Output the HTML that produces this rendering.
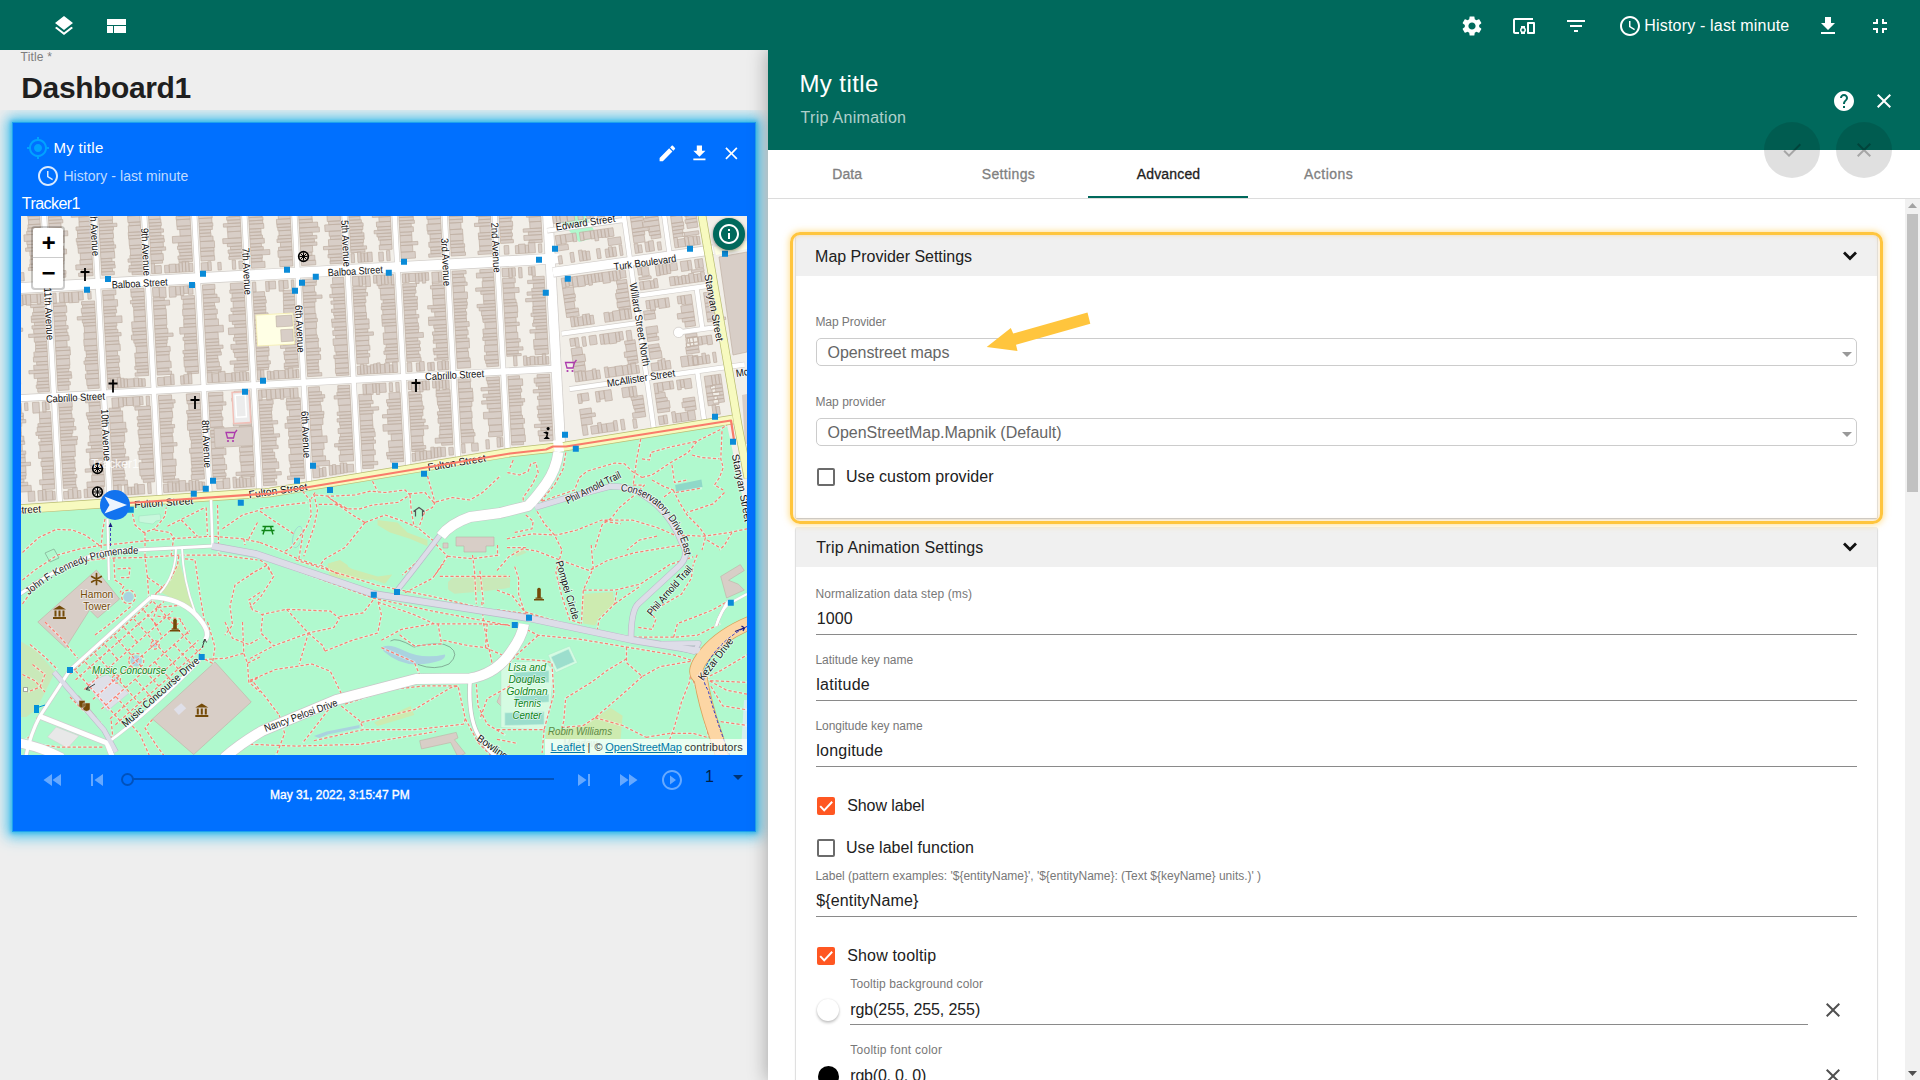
<!DOCTYPE html>
<html lang="en"><head><meta charset="utf-8"><title>Dashboard1</title>
<style>
*{box-sizing:border-box;margin:0;padding:0}
html,body{width:1920px;height:1080px;overflow:hidden;background:#eee;font-family:"Liberation Sans",sans-serif}
body{position:relative}
.t{position:absolute;white-space:nowrap;line-height:1;z-index:50}
.ic{position:absolute;display:block;z-index:51}
.abs{position:absolute}
#topbar{left:0;top:0;width:1920px;height:50px;background:#00695c;z-index:12}
#dash{left:0;top:110px;width:768px;height:970px;overflow:hidden;z-index:1}
#widget{left:12px;top:12px;width:744px;height:710px;background:#0070ff;border:1px solid #1ea2ee;box-shadow:0 0 13px 5px rgba(66,192,236,.95),0 0 4px 1px #1aa6e6}
#map{left:21px;top:216px;width:726px;height:539px;overflow:hidden;z-index:3;background:#f2efe9}
#panel{left:768px;top:50px;width:1152px;height:1030px;background:#fff;z-index:10;box-shadow:0 0 18px 1px rgba(0,0,0,.3)}
#phead{left:768px;top:50px;width:1152px;height:100px;background:#00695c;z-index:11}
.fab{width:56px;height:56px;border-radius:50%;background:rgba(0,0,0,.12);z-index:40}
#tabline{left:768px;top:198px;width:1152px;height:1px;background:#dcdcdc;z-index:12}
#ink{left:1088px;top:196px;width:160px;height:2px;background:#00695c;z-index:13}
.exp{background:#fff;z-index:12;box-shadow:0 1px 2px rgba(0,0,0,.25),0 0 1px rgba(0,0,0,.25)}
.exph{background:#f0f0f0;z-index:13}
.sel{border:1px solid #ccc;border-radius:5px;background:#fff;z-index:14}
.ul{height:1px;background:#8a8a8a;z-index:14}
.cb{width:18px;height:18px;border-radius:2px;z-index:14}
.cb.off{border:2px solid #6b6b6b}
.cb.on{background:#ff5722}
.z20{z-index:20}

</style></head>
<body>
<div class="abs" id="topbar"></div>
<svg class="ic" style="left:52.00px;top:13.50px;" width="24" height="24" viewBox="0 0 24 24"><path fill="#fff" d="M11.99 18.54l-7.37-5.73L3 14.07l9 7 9-7-1.63-1.27-7.38 5.74zM12 16l7.36-5.73L21 9l-9-7-9 7 1.63 1.27L12 16z"/></svg>
<svg class="ic" style="left:103.80px;top:14.00px;" width="24" height="24" viewBox="0 0 24 24"><path fill="#fff" d="M3 19h6v-7H3v7zm7 0h12v-7H10v7zM3 5v6h19V5H3z"/></svg>
<svg class="ic" style="left:1459.50px;top:13.50px;" width="24" height="24" viewBox="0 0 24 24"><path fill="#fff" d="M19.14 12.94c.04-.3.06-.61.06-.94 0-.32-.02-.64-.07-.94l2.03-1.58c.18-.14.23-.41.12-.61l-1.92-3.32c-.12-.22-.37-.29-.59-.22l-2.39.96c-.5-.38-1.03-.7-1.62-.94l-.36-2.54c-.04-.24-.24-.41-.48-.41h-3.84c-.24 0-.43.17-.47.41l-.36 2.54c-.59.24-1.13.57-1.62.94l-2.39-.96c-.22-.08-.47 0-.59.22L2.74 8.87c-.12.21-.08.47.12.61l2.03 1.58c-.05.3-.09.63-.09.94s.02.64.07.94l-2.03 1.58c-.18.14-.23.41-.12.61l1.92 3.32c.12.22.37.29.59.22l2.39-.96c.5.38 1.03.7 1.62.94l.36 2.54c.05.24.24.41.48.41h3.84c.24 0 .44-.17.47-.41l.36-2.54c.59-.24 1.13-.56 1.62-.94l2.39.96c.22.08.47 0 .59-.22l1.92-3.32c.12-.22.07-.47-.12-.61l-2.01-1.58zM12 15.6c-1.98 0-3.6-1.62-3.6-3.6s1.62-3.6 3.6-3.6 3.6 1.62 3.6 3.6-1.62 3.6-3.6 3.6z"/></svg>
<svg class="ic" style="left:1511.70px;top:13.50px;" width="24" height="24" viewBox="0 0 24 24"><path fill="#fff" d="M3 6h18V4H3c-1.1 0-2 .9-2 2v12c0 1.1.9 2 2 2h4v-2H3V6zm10 6H9v1.78c-.61.55-1 1.33-1 2.22s.39 1.67 1 2.22V20h4v-1.78c.61-.55 1-1.34 1-2.22s-.39-1.67-1-2.22V12zm-2 5.5c-.83 0-1.5-.67-1.5-1.500s.67-1.500 1.500-1.500 1.500.67 1.500 1.500-.67 1.500-1.500 1.500zM22 8h-6c-.5 0-1 .5-1 1v10c0 .5.5 1 1 1h6c.5 0 1-.5 1-1V9c0-.5-.5-1-1-1zm-1 10h-4v-8h4v8z"/></svg>
<svg class="ic" style="left:1564.00px;top:13.50px;" width="24" height="24" viewBox="0 0 24 24"><path fill="#fff" d="M10 18h4v-2h-4v2zM3 6v2h18V6H3zm3 7h12v-2H6v2z"/></svg>
<svg class="ic" style="left:1617.50px;top:13.50px;" width="24" height="24" viewBox="0 0 24 24"><path fill="#fff" d="M11.99 2C6.47 2 2 6.48 2 12s4.47 10 9.99 10C17.52 22 22 17.52 22 12S17.52 2 11.99 2zM12 20c-4.42 0-8-3.58-8-8s3.58-8 8-8 8 3.58 8 8-3.58 8-8 8zm.5-13H11v6l5.25 3.15.75-1.23-4.5-2.67z"/></svg>
<svg class="ic" style="left:1815.70px;top:13.50px;" width="24" height="24" viewBox="0 0 24 24"><path fill="#fff" d="M19 9h-4V3H9v6H5l7 7 7-7zM5 18v2h14v-2H5z"/></svg>
<svg class="ic" style="left:1868.00px;top:13.50px;" width="24" height="24" viewBox="0 0 24 24"><path fill="#fff" d="M5 16h3v3h2v-5H5v2zm3-8H5v2h5V5H8v3zm6 11h2v-3h3v-2h-5v5zm2-11V5h-2v5h5V8h-3z"/></svg>

<div class="abs" id="dash"><div class="abs" id="widget"></div></div>
<div class="abs" id="map"><svg width="726" height="539" viewBox="21 216 726 539" style="display:block;font-family:'Liberation Sans',sans-serif">
<rect x="21" y="216" width="726" height="539" fill="#f2efe9"/>
<path d="M20 513.5 270 497 510 457 565 451 727 425 735 462 741 490 747 520 747 756 20 756z" fill="#b0f9ce"/>
<path d="M556 216l28-3 14 24-19 5zM630 216h14l-2 4z" fill="#b0f9ce"/>
<g transform="translate(20 288) rotate(-3.15)">
<path d="M-17.7 -94h12.9v3.3h-12.9zM-17.7 -90.7h15.4v3.3h-15.4zM-17.7 -87.4h12.5v3.3h-12.5zM-17.7 -84.1h13.2v3.3h-13.2zM-17.7 -80.8h12.4v3.3h-12.4zM-17.7 -77.5h11.5v3.3h-11.5zM-17.7 -74.2h12.1v6.6h-12.1zM-17.7 -67.6h13v3.3h-13zM-17.7 -64.3h14v3.3h-14zM-17.7 -61h12.1v6.6h-12.1zM-17.7 -54.4h11.9v4.9h-11.9zM-17.7 -49.5h12.1v3.3h-12.1zM-17.7 -46.2h12v3.3h-12zM-17.7 -42.9h11.6v3.3h-11.6zM-17.7 -39.6h18.6v4.9h-18.6zM-17.7 -34.6h12.2v3.3h-12.2zM-17.7 -31.3h11.3v4.9h-11.3zM-17.7 -26.4h13.5v3.3h-13.5zM-17.7 -23.1h12.4v4.9h-12.4zM23.7 -94h-12.2v3.3h12.2zM23.7 -90.7h-13.7v4.9h13.7zM23.7 -85.8h-14.2v3.3h14.2zM23.7 -82.5h-12.9v3.3h12.9zM23.7 -79.2h-12v4.9h12zM23.7 -74.2h-12.3v3.3h12.3zM23.7 -70.9h-11.8v3.3h11.8zM23.7 -67.6h-11.6v4.9h11.6zM23.7 -62.7h-12.3v3.3h12.3zM23.7 -59.4h-12.8v3.3h12.8zM23.7 -56.1h-14v3.3h14zM23.7 -52.8h-16.9v6.6h16.9zM23.7 -46.2h-14.4v3.3h14.4zM23.7 -42.9h-13.8v3.3h13.8zM23.7 -39.6h-16v3.3h16zM23.7 -36.3h-11.9v4.9h11.9zM23.7 -31.3h-11.4v3.3h11.4zM23.7 -28h-12.1v4.9h12.1zM23.7 -23.1h-12.7v3.3h12.7zM23.7 -19.8h-14.3v2.8h14.3zM-17.7 -104h3.3v10.7h-3.3zM-14.4 -104h6.6v9.8h-6.6zM-7.8 -104h3.3v8.4h-3.3zM-1.2 -104h3.3v9.4h-3.3zM2.1 -104h6.6v8.3h-6.6zM12 -104h4.6v8.3h-4.6zM16.6 -104h6.6v10.1h-6.6zM-17.7 -7h3.3v-9.2h-3.3zM-14.4 -7h3.3v-10.8h-3.3zM-3.2 -7h3.3v-7.9h-3.3zM0.1 -7h4.6v-8.2h-4.6zM-17.7 17h13.7v3.3h-13.7zM-17.7 20.3h12.5v4.9h-12.5zM-17.7 25.2h14.4v3.3h-14.4zM-17.7 28.6h11.3v4.9h-11.3zM-17.7 33.5h13.1v3.3h-13.1zM-17.7 36.8h13.1v3.3h-13.1zM-17.7 40.1h18.1v3.3h-18.1zM-17.7 43.4h14.3v3.3h-14.3zM-17.7 46.7h11.7v3.3h-11.7zM-17.7 50h13.7v3.3h-13.7zM-17.7 53.3h11.5v6.6h-11.5zM-17.7 59.9h13.3v3.3h-13.3zM-17.7 63.2h14.2v6.6h-14.2zM-17.7 69.8h12.8v6.6h-12.8zM-17.7 76.4h13.7v3.3h-13.7zM-17.7 79.7h13.5v3.3h-13.5zM-17.7 83h12.9v3.3h-12.9zM-17.7 86.3h11.2v3.3h-11.2zM-17.7 89.6h12.8v3.3h-12.8zM-17.7 92.9h13.1v3.3h-13.1zM-17.7 96.2h12v6.6h-12zM-17.7 102.8h11.9v2.2h-11.9zM23.7 17h-14.1v3.3h14.1zM23.7 20.3h-11.4v4.9h11.4zM23.7 25.2h-12.5v3.3h12.5zM23.7 28.6h-14.1v3.3h14.1zM23.7 31.9h-14.1v3.3h14.1zM23.7 35.1h-11.3v3.3h11.3zM23.7 38.4h-13.9v3.3h13.9zM23.7 41.7h-12.4v4.9h12.4zM23.7 46.7h-17.7v3.3h17.7zM23.7 50h-12.3v4.9h12.3zM23.7 54.9h-11.2v3.3h11.2zM23.7 58.2h-11.4v3.3h11.4zM23.7 61.5h-11.6v3.3h11.6zM23.7 64.8h-13.4v4.9h13.4zM23.7 69.8h-14.2v4.9h14.2zM23.7 74.7h-11.2v3.3h11.2zM23.7 78h-14.3v4.9h14.3zM23.7 83h-19.4v3.3h19.4zM23.7 86.3h-14.5v4.9h14.5zM23.7 91.2h-11.2v3.3h11.2zM23.7 94.5h-11.9v3.3h11.9zM23.7 97.8h-12.9v3.3h12.9zM23.7 101.1h-11.6v3.9h11.6zM-14.4 7h3.3v10.1h-3.3zM-4.5 7h6.6v10.8h-6.6zM2.1 7h3.3v9.8h-3.3zM5.4 7h4.6v10.6h-4.6zM10 7h6.6v8.3h-6.6zM16.6 7h3.3v10.4h-3.3zM19.9 7h3.3v8.7h-3.3zM-17.7 125h14.1v3.3h-14.1zM-17.7 128.3h13.9v3.3h-13.9zM-17.7 131.6h16.2v3.3h-16.2zM-17.7 134.9h11.9v3.3h-11.9zM-17.7 138.2h11.1v6.6h-11.1zM-17.7 144.8h11v3.3h-11zM-17.7 148.1h13.3v4.9h-13.3zM-17.7 153.1h13.9v3.3h-13.9zM-17.7 156.4h11.1v6.6h-11.1zM-17.7 163h14.4v3.3h-14.4zM-17.7 166.3h13.5v3.3h-13.5zM-17.7 169.6h13.5v4.9h-13.5zM-17.7 174.5h18.6v3.3h-18.6zM-17.7 177.8h13.6v6.6h-13.6zM-17.7 184.4h13.6v3.3h-13.6zM-17.7 187.7h13v3.3h-13zM-17.7 191h11.1v3.3h-11.1zM-17.7 194.3h14.7v3.3h-14.7zM-17.7 197.6h17.9v6.2h-17.9zM23.7 125h-11.3v6.6h11.3zM23.7 131.6h-11.3v4.9h11.3zM23.7 136.5h-13.3v3.3h13.3zM23.7 139.8h-14.2v4.9h14.2zM23.7 144.8h-15.8v3.3h15.8zM23.7 148.1h-13.4v3.3h13.4zM23.7 151.4h-11.2v3.3h11.2zM23.7 154.7h-13.4v3.3h13.4zM23.7 158h-12.6v6.6h12.6zM23.7 164.6h-14.4v6.6h14.4zM23.7 171.2h-11.3v3.3h11.3zM23.7 174.5h-12.4v4.9h12.4zM23.7 179.5h-11.3v3.3h11.3zM23.7 182.8h-11.5v3.3h11.5zM23.7 186.1h-11.4v6.6h11.4zM23.7 192.7h-14.7v4.9h14.7zM23.7 197.6h-12.4v4.9h12.4zM-17.7 115h4.6v8.6h-4.6zM-13.1 115h3.3v10.1h-3.3zM-9.8 115h4.6v10.7h-4.6zM-1.9 115h3.3v7.7h-3.3zM6.1 115h6.6v10.7h-6.6zM16 115h3.3v10.4h-3.3zM19.3 115h3.3v8h-3.3zM-17.7 213.8h3.3v-8.6h-3.3zM-14.4 213.7h3.3v-9h-3.3zM-3.2 213.6h6.6v-10h-6.6zM6.7 213.5h4.6v-10.1h-4.6zM11.3 213.4h3.3v-10.7h-3.3zM14.6 213.4h6.6v-9.2h-6.6zM21.2 213.3h2.5v-8.4h-2.5zM32.3 -104h12.1v4.9h-12.1zM32.3 -99h17.3v4.9h-17.3zM32.3 -94.1h12.6v4.9h-12.6zM32.3 -89.1h12.9v4.9h-12.9zM32.3 -84.2h11.3v3.3h-11.3zM32.3 -80.9h17.2v3.3h-17.2zM32.3 -77.6h12.8v4.9h-12.8zM32.3 -72.6h12.7v3.3h-12.7zM32.3 -69.3h12.8v3.3h-12.8zM32.3 -66h14.1v3.3h-14.1zM32.3 -62.8h12.1v4.9h-12.1zM32.3 -57.8h12.5v3.3h-12.5zM32.3 -54.5h18.4v4.9h-18.4zM32.3 -49.5h14.4v6.6h-14.4zM32.3 -42.9h11.5v3.3h-11.5zM32.3 -39.6h13.5v3.3h-13.5zM32.3 -36.4h16.2v4.9h-16.2zM32.3 -31.4h13.3v6.6h-13.3zM32.3 -24.8h12.8v3.3h-12.8zM32.3 -21.5h12.1v3.3h-12.1zM32.3 -18.2h11.8v3.3h-11.8zM32.3 -14.9h14.5v3.3h-14.5zM32.3 -11.6h14.1v3.3h-14.1zM73.7 -104h-11.1v3.3h11.1zM73.7 -100.7h-11.7v3.3h11.7zM73.7 -97.4h-11.8v4.9h11.8zM73.7 -92.5h-11.1v3.3h11.1zM73.7 -89.2h-15.6v4.9h15.6zM73.7 -84.2h-12.7v6.6h12.7zM73.7 -77.6h-11.8v3.3h11.8zM73.7 -74.3h-13.2v3.3h13.2zM73.7 -71h-18.6v3.3h18.6zM73.7 -67.7h-11.1v4.9h11.1zM73.7 -62.8h-11.2v4.9h11.2zM73.7 -57.8h-14.5v3.3h14.5zM73.7 -54.5h-13.3v3.3h13.3zM73.7 -51.2h-13.3v4.9h13.3zM73.7 -46.3h-14.9v3.3h14.9zM73.7 -43h-14.3v3.3h14.3zM73.7 -39.7h-13.7v3.3h13.7zM73.7 -36.4h-13.5v4.9h13.5zM73.7 -31.4h-11.7v6.6h11.7zM73.7 -24.8h-12.4v4.9h12.4zM73.7 -19.9h-16.8v4.9h16.8zM73.7 -14.9h-11.2v3.3h11.2zM73.7 -11.6h-14.4v3.3h14.4zM32.3 17h12v3.3h-12zM32.3 20.3h13.2v6.6h-13.2zM32.3 26.9h11.4v3.3h-11.4zM32.3 30.2h12.4v4.9h-12.4zM32.3 35.1h11.5v4.9h-11.5zM32.3 40.1h13.6v3.3h-13.6zM32.3 43.4h12.1v3.3h-12.1zM32.3 46.7h13.1v3.3h-13.1zM32.3 50h14v4.9h-14zM32.3 54.9h11.6v6.6h-11.6zM32.3 61.5h14.3v3.3h-14.3zM32.3 64.8h14.4v4.9h-14.4zM32.3 69.8h13.2v3.3h-13.2zM32.3 73.1h13.3v6.6h-13.3zM32.3 79.7h13v3.3h-13zM32.3 83h11.9v3.3h-11.9zM32.3 86.3h14.2v3.3h-14.2zM32.3 89.6h14.5v3.3h-14.5zM32.3 92.9h11.4v3.3h-11.4zM32.3 96.2h12.7v3.3h-12.7zM32.3 99.5h11.1v4.9h-11.1zM73.7 17h-13.1v3.3h13.1zM73.7 20.3h-12.3v3.3h12.3zM73.7 23.6h-13.7v4.9h13.7zM73.7 28.6h-13.1v3.3h13.1zM73.7 31.9h-18.2v3.3h18.2zM73.7 35.1h-13.3v3.3h13.3zM73.7 38.4h-12.4v3.3h12.4zM73.7 41.7h-11.7v6.6h11.7zM73.7 48.3h-12.4v6.6h12.4zM73.7 54.9h-12.9v6.6h12.9zM73.7 61.5h-12.4v4.9h12.4zM73.7 66.5h-11.2v3.3h11.2zM73.7 69.8h-11.1v3.3h11.1zM73.7 73.1h-12.4v3.3h12.4zM73.7 76.4h-13.9v3.3h13.9zM73.7 79.7h-12.6v6.6h12.6zM73.7 86.3h-11.5v3.3h11.5zM73.7 89.6h-13.2v4.9h13.2zM73.7 94.5h-12.2v6.6h12.2zM73.7 101.1h-11.4v3.3h11.4zM32.3 7h3.3v10.4h-3.3zM38.9 7h4.6v9.6h-4.6zM43.5 7h4.6v10h-4.6zM48.1 7h3.3v10.5h-3.3zM51.4 7h6.6v10.5h-6.6zM58 7h4.6v8.3h-4.6zM67.3 7h3.3v7.9h-3.3zM32.3 115h13.4v6.6h-13.4zM32.3 121.6h13.1v3.3h-13.1zM32.3 124.9h12.1v3.3h-12.1zM32.3 128.2h12.6v4.9h-12.6zM32.3 133.1h14.5v3.3h-14.5zM32.3 136.4h13.7v4.9h-13.7zM32.3 141.4h15.8v3.3h-15.8zM32.3 144.7h12.5v3.3h-12.5zM32.3 148h11.5v3.3h-11.5zM32.3 151.3h16.8v3.3h-16.8zM32.3 154.6h16v4.9h-16zM32.3 159.6h13.9v6.6h-13.9zM32.3 166.2h13.8v4.9h-13.8zM32.3 171.1h12.2v3.3h-12.2zM32.3 174.4h13.1v3.3h-13.1zM32.3 177.7h12.8v4.9h-12.8zM32.3 182.7h13.2v3.3h-13.2zM32.3 186h11.6v3.3h-11.6zM32.3 189.3h14.1v3.3h-14.1zM32.3 192.6h12.9v3.3h-12.9zM32.3 195.9h12.6v3.3h-12.6zM32.3 199.2h12.9v3.3h-12.9zM73.7 115h-14.5v3.3h14.5zM73.7 118.3h-11.3v3.3h11.3zM73.7 121.6h-11.2v6.6h11.2zM73.7 128.2h-14.4v3.3h14.4zM73.7 131.5h-13.6v3.3h13.6zM73.7 134.8h-12.5v3.3h12.5zM73.7 138.1h-11.8v3.3h11.8zM73.7 141.4h-13v3.3h13zM73.7 144.7h-11.8v6.6h11.8zM73.7 151.3h-12.3v6.6h12.3zM73.7 157.9h-14.3v3.3h14.3zM73.7 161.2h-11.2v3.3h11.2zM73.7 164.5h-16.5v3.3h16.5zM73.7 167.8h-13.1v6.6h13.1zM73.7 174.4h-13.6v6.6h13.6zM73.7 181h-12.9v3.3h12.9zM73.7 184.3h-18.6v3.3h18.6zM73.7 187.6h-11.7v3.3h11.7zM73.7 190.9h-12.5v6.6h12.5zM73.7 197.5h-17.6v5.3h17.6zM32.3 213.2h4.6v-7.5h-4.6zM36.9 213.1h4.6v-9.1h-4.6zM41.5 213.1h4.6v-11h-4.6zM46.2 213.1h3.3v-7.6h-3.3zM52.8 213h3.3v-8.4h-3.3zM56.1 212.9h6.6v-9.9h-6.6zM69.3 212.8h3.3v-10.9h-3.3zM82.3 -94h14.2v3.3h-14.2zM82.3 -90.7h13.6v3.3h-13.6zM82.3 -87.4h11.8v4.9h-11.8zM82.3 -82.5h13.9v6.6h-13.9zM82.3 -75.9h13.5v3.3h-13.5zM82.3 -72.6h12.4v3.3h-12.4zM82.3 -69.3h13.9v6.6h-13.9zM82.3 -62.7h13.7v3.3h-13.7zM82.3 -59.4h17.9v3.3h-17.9zM82.3 -56.1h14.3v3.3h-14.3zM82.3 -52.8h13.6v3.3h-13.6zM82.3 -49.5h13.9v4.9h-13.9zM82.3 -44.5h13.2v3.3h-13.2zM82.3 -41.2h13.8v3.3h-13.8zM82.3 -37.9h15.5v3.3h-15.5zM82.3 -34.6h13.7v3.3h-13.7zM82.3 -31.3h14v6.6h-14zM82.3 -24.7h11.1v3.3h-11.1zM82.3 -21.4h13.5v3.3h-13.5zM82.3 -18.1h13.9v3.3h-13.9zM82.3 -14.8h11v3.3h-11zM82.3 -11.5h12.7v3.3h-12.7zM123.7 -94h-13.1v3.3h13.1zM123.7 -90.7h-14.3v6.6h14.3zM123.7 -84.1h-11.8v3.3h11.8zM123.7 -80.8h-14.5v3.3h14.5zM123.7 -77.5h-12.2v3.3h12.2zM123.7 -74.2h-13.6v4.9h13.6zM123.7 -69.3h-12.1v3.3h12.1zM123.7 -66h-12.3v6.6h12.3zM123.7 -59.4h-11.4v3.3h11.4zM123.7 -56.1h-12.2v6.6h12.2zM123.7 -49.5h-12.6v3.3h12.6zM123.7 -46.2h-12.5v3.3h12.5zM123.7 -42.9h-12.2v6.6h12.2zM123.7 -36.3h-11.9v3.3h11.9zM123.7 -33h-11.5v6.6h11.5zM123.7 -26.4h-12.2v3.3h12.2zM123.7 -23.1h-14.3v3.3h14.3zM123.7 -19.8h-11.4v3.3h11.4zM123.7 -16.5h-13.6v3.3h13.6zM123.7 -13.2h-14.2v3.3h14.2zM123.7 -9.9h-11v2.9h11zM82.3 -104h4.6v9.3h-4.6zM86.9 -104h3.3v8h-3.3zM90.2 -104h6.6v7.5h-6.6zM100.1 -104h4.6v9.6h-4.6zM116 -104h3.3v9.1h-3.3zM119.3 -104h3.3v10h-3.3zM82.3 7h13.2v4.9h-13.2zM82.3 11.9h11.1v4.9h-11.1zM82.3 16.9h14.3v6.6h-14.3zM82.3 23.5h12.4v3.3h-12.4zM82.3 26.8h12.9v3.3h-12.9zM82.3 30.1h11.4v3.3h-11.4zM82.3 33.4h17.8v6.6h-17.8zM82.3 40h12.4v3.3h-12.4zM82.3 43.3h11.6v3.3h-11.6zM82.3 46.6h13.1v3.3h-13.1zM82.3 49.9h16.1v3.3h-16.1zM82.3 53.2h13.4v4.9h-13.4zM82.3 58.1h13.6v3.3h-13.6zM82.3 61.4h14.5v6.6h-14.5zM82.3 68h11.5v4.9h-11.5zM82.3 73h13v3.3h-13zM82.3 76.3h13.2v3.3h-13.2zM82.3 79.6h12v4.9h-12zM82.3 84.5h12.6v3.3h-12.6zM82.3 87.8h12.3v3.3h-12.3zM82.3 91.1h12.7v3.9h-12.7zM123.7 7h-13.3v3.3h13.3zM123.7 10.3h-13.2v4.9h13.2zM123.7 15.2h-12.1v3.3h12.1zM123.7 18.6h-14.2v3.3h14.2zM123.7 21.9h-12.2v3.3h12.2zM123.7 25.2h-11.3v3.3h11.3zM123.7 28.5h-11.5v6.6h11.5zM123.7 35.1h-11.5v4.9h11.5zM123.7 40h-14.1v6.6h14.1zM123.7 46.6h-14.1v3.3h14.1zM123.7 49.9h-13.4v3.3h13.4zM123.7 53.2h-15.1v4.9h15.1zM123.7 58.1h-13v3.3h13zM123.7 61.4h-11.9v3.3h11.9zM123.7 64.7h-11v6.6h11zM123.7 71.3h-12.7v4.9h12.7zM123.7 76.3h-12.5v4.9h12.5zM123.7 81.2h-12.3v3.3h12.3zM123.7 84.5h-13.4v3.3h13.4zM123.7 87.8h-11.3v3.3h11.3zM123.7 91.1h-13.5v3.3h13.5zM82.3 105h3.3v-9.8h-3.3zM85.6 105h3.3v-9.3h-3.3zM88.9 105h3.3v-8.7h-3.3zM92.2 105h3.3v-10.4h-3.3zM95.5 105h3.3v-9.2h-3.3zM98.8 105h3.3v-8.5h-3.3zM102.1 105h6.6v-8.2h-6.6zM108.7 105h4.6v-8.7h-4.6zM113.3 105h3.3v-7.9h-3.3zM116.6 105h3.3v-7.6h-3.3zM82.3 125h11.2v3.3h-11.2zM82.3 128.3h13.3v4.9h-13.3zM82.3 133.2h13.2v6.6h-13.2zM82.3 139.8h15.8v6.6h-15.8zM82.3 146.4h16.7v3.3h-16.7zM82.3 149.8h13.9v3.3h-13.9zM82.3 153.1h14v6.6h-14zM82.3 159.7h12.5v3.3h-12.5zM82.3 163h12.8v3.3h-12.8zM82.3 166.3h14.2v4.9h-14.2zM82.3 171.2h13.1v3.3h-13.1zM82.3 174.5h17v3.3h-17zM82.3 177.8h13.2v3.3h-13.2zM82.3 181.1h11.4v3.3h-11.4zM82.3 184.4h11.4v3.3h-11.4zM82.3 187.7h11.8v3.3h-11.8zM82.3 191h12.3v3.3h-12.3zM82.3 194.3h11.3v3.3h-11.3zM82.3 197.6h14.3v4.9h-14.3zM123.7 125h-15.6v3.3h15.6zM123.7 128.3h-12.1v6.6h12.1zM123.7 134.9h-13.9v3.3h13.9zM123.7 138.2h-13v3.3h13zM123.7 141.5h-13.8v3.3h13.8zM123.7 144.8h-12.5v3.3h12.5zM123.7 148.1h-13.7v4.9h13.7zM123.7 153.1h-13.2v3.3h13.2zM123.7 156.4h-13.1v6.6h13.1zM123.7 163h-12.1v3.3h12.1zM123.7 166.3h-13.4v3.3h13.4zM123.7 169.6h-15v3.3h15zM123.7 172.9h-14.2v4.9h14.2zM123.7 177.8h-11.5v3.3h11.5zM123.7 181.1h-14.4v6.6h14.4zM123.7 187.7h-14.2v6.6h14.2zM123.7 194.3h-12.7v3.3h12.7zM123.7 197.6h-11.2v3.3h11.2zM85.6 115h6.6v10.3h-6.6zM92.2 115h4.6v9.4h-4.6zM96.8 115h3.3v8.3h-3.3zM100.1 115h6.6v8.4h-6.6zM106.7 115h6.6v9.3h-6.6zM113.3 115h3.3v8.2h-3.3zM119.9 115h3.3v9.5h-3.3zM82.3 212.7h4.6v-10.5h-4.6zM86.9 212.6h3.3v-11h-3.3zM93.5 212.5h3.3v-10.3h-3.3zM96.8 212.5h3.3v-7.6h-3.3zM100.1 212.5h3.3v-7.6h-3.3zM103.4 212.4h3.3v-10.5h-3.3zM106.7 212.4h6.6v-9.5h-6.6zM116.6 212.3h3.3v-10.8h-3.3zM132.3 -104h14.5v3.3h-14.5zM132.3 -100.7h13v3.3h-13zM132.3 -97.4h14v4.9h-14zM132.3 -92.5h14.2v6.6h-14.2zM132.3 -85.9h13v3.3h-13zM132.3 -82.6h12.6v6.6h-12.6zM132.3 -76h14.8v3.3h-14.8zM132.3 -72.7h18.6v3.3h-18.6zM132.3 -69.4h13.5v3.3h-13.5zM132.3 -66.1h11.5v4.9h-11.5zM132.3 -61.1h12v3.3h-12zM132.3 -57.8h12.3v3.3h-12.3zM132.3 -54.5h11.6v3.3h-11.6zM132.3 -51.2h14.1v3.3h-14.1zM132.3 -47.9h11.5v3.3h-11.5zM132.3 -44.6h14v3.3h-14zM132.3 -41.3h14.4v3.3h-14.4zM132.3 -38h13.2v4.9h-13.2zM132.3 -33.1h15.3v3.3h-15.3zM132.3 -29.8h11.2v3.3h-11.2zM132.3 -26.5h12.5v6.6h-12.5zM132.3 -19.9h11.5v2.9h-11.5zM173.7 -104h-11.6v3.3h11.6zM173.7 -100.7h-12.7v3.3h12.7zM173.7 -97.4h-14.1v6.6h14.1zM173.7 -90.8h-18.9v3.3h18.9zM173.7 -87.5h-11.9v3.3h11.9zM173.7 -84.2h-12v3.3h12zM173.7 -80.9h-14.4v3.3h14.4zM173.7 -77.6h-12.8v3.3h12.8zM173.7 -74.3h-13.9v4.9h13.9zM173.7 -69.4h-11.1v3.3h11.1zM173.7 -66.1h-11.5v3.3h11.5zM173.7 -62.8h-14v3.3h14zM173.7 -59.5h-13.7v6.6h13.7zM173.7 -52.9h-13.5v3.3h13.5zM173.7 -49.6h-11v6.6h11zM173.7 -43h-18.8v6.6h18.8zM173.7 -36.4h-13.2v3.3h13.2zM173.7 -33.1h-14.2v3.3h14.2zM173.7 -29.8h-13v3.3h13zM173.7 -26.5h-12.3v3.3h12.3zM173.7 -23.2h-14.3v3.3h14.3zM173.7 -19.9h-13.5v2.9h13.5zM132.3 -7h3.3v-10.5h-3.3zM135.6 -7h6.6v-7.7h-6.6zM145.5 -7h4.6v-7.6h-4.6zM150.1 -7h6.6v-8.4h-6.6zM156.7 -7h3.3v-8.1h-3.3zM160 -7h3.3v-9.4h-3.3zM163.3 -7h3.3v-10.7h-3.3zM166.6 -7h3.3v-10.4h-3.3zM169.9 -7h3.8v-8.3h-3.8zM132.3 17h11.2v3.3h-11.2zM132.3 20.3h16.2v4.9h-16.2zM132.3 25.2h11.8v3.3h-11.8zM132.3 28.6h12.4v6.6h-12.4zM132.3 35.1h12.4v3.3h-12.4zM132.3 38.4h12.4v6.6h-12.4zM132.3 45h11.8v3.3h-11.8zM132.3 48.3h13v4.9h-13zM132.3 53.3h18v3.3h-18zM132.3 56.6h12.5v3.3h-12.5zM132.3 59.9h11.7v3.3h-11.7zM132.3 63.2h11.1v3.3h-11.1zM132.3 66.5h14.3v4.9h-14.3zM132.3 71.4h13.2v3.3h-13.2zM132.3 74.7h12.9v6.6h-12.9zM132.3 81.3h14.4v6.6h-14.4zM132.3 87.9h12.1v3.3h-12.1zM132.3 91.2h14.4v3.3h-14.4zM173.7 17h-13.1v3.3h13.1zM173.7 20.3h-11.5v4.9h11.5zM173.7 25.2h-12v4.9h12zM173.7 30.2h-12.6v6.6h12.6zM173.7 36.8h-11.7v3.3h11.7zM173.7 40.1h-12.1v4.9h12.1zM173.7 45h-12.2v3.3h12.2zM173.7 48.3h-16.5v6.6h16.5zM173.7 54.9h-12.1v3.3h12.1zM173.7 58.2h-13.7v3.3h13.7zM173.7 61.5h-12.2v3.3h12.2zM173.7 64.8h-12.5v6.6h12.5zM173.7 71.4h-14.5v3.3h14.5zM173.7 74.7h-13.3v3.3h13.3zM173.7 78h-14v3.3h14zM173.7 81.3h-14v6.6h14zM173.7 87.9h-13.2v4.9h13.2zM173.7 92.9h-11.4v2.1h11.4zM132.3 7h6.6v9.2h-6.6zM138.9 7h6.6v10.5h-6.6zM148.8 7h6.6v10.5h-6.6zM155.4 7h4.6v8.7h-4.6zM160 7h3.3v9.4h-3.3zM163.3 7h4.6v7.5h-4.6zM167.9 7h4.6v8.6h-4.6zM132.3 105h6.6v-8h-6.6zM138.9 105h6.6v-8.3h-6.6zM145.5 105h3.3v-10.5h-3.3zM155.4 105h3.3v-8.4h-3.3zM158.7 105h4.6v-9.4h-4.6zM163.3 105h3.3v-11h-3.3zM132.3 115h13.1v4.9h-13.1zM132.3 120h16.3v3.3h-16.3zM132.3 123.2h14.2v4.9h-14.2zM132.3 128.2h12.7v3.3h-12.7zM132.3 131.5h13.1v6.6h-13.1zM132.3 138.1h12.1v3.3h-12.1zM132.3 141.4h11.4v3.3h-11.4zM132.3 144.7h14.5v3.3h-14.5zM132.3 148h12.8v4.9h-12.8zM132.3 153h11.7v3.3h-11.7zM132.3 156.3h12.2v6.6h-12.2zM132.3 162.9h15.9v3.3h-15.9zM132.3 166.2h12.1v6.6h-12.1zM132.3 172.8h11.1v6.6h-11.1zM132.3 179.4h14v6.6h-14zM132.3 186h13v6.6h-13zM132.3 192.6h12.8v3.3h-12.8zM132.3 195.9h11.6v3.3h-11.6zM132.3 199.2h15.9v3h-15.9zM173.7 115h-13.5v6.6h13.5zM173.7 121.6h-13.2v3.3h13.2zM173.7 124.9h-11.7v6.6h11.7zM173.7 131.5h-14.1v3.3h14.1zM173.7 134.8h-13.2v3.3h13.2zM173.7 138.1h-13.1v3.3h13.1zM173.7 141.4h-13.9v3.3h13.9zM173.7 144.7h-14.1v6.6h14.1zM173.7 151.3h-12.4v3.3h12.4zM173.7 154.6h-12.4v3.3h12.4zM173.7 157.9h-11.9v3.3h11.9zM173.7 161.2h-11v3.3h11zM173.7 164.5h-11.4v4.9h11.4zM173.7 169.5h-13.3v4.9h13.3zM173.7 174.4h-12.2v4.9h12.2zM173.7 179.4h-12.2v3.3h12.2zM173.7 182.7h-12.2v3.3h12.2zM173.7 186h-11.9v3.3h11.9zM173.7 189.3h-12.6v3.3h12.6zM173.7 192.6h-12.2v3.3h12.2zM173.7 195.9h-13v4.9h13zM132.3 212.1h4.6v-8.3h-4.6zM136.9 212.1h4.6v-10.8h-4.6zM141.5 212h3.3v-9h-3.3zM144.8 212h3.3v-8.9h-3.3zM148.1 211.9h6.6v-10.6h-6.6zM154.7 211.9h3.3v-7.8h-3.3zM158 211.8h3.3v-10.2h-3.3zM161.3 211.8h3.3v-9.5h-3.3zM164.6 211.8h3.3v-10h-3.3zM167.9 211.7h3.3v-8.3h-3.3zM171.2 211.7h2.5v-7.9h-2.5zM182.3 -104h11.7v6.6h-11.7zM182.3 -97.4h11.4v3.3h-11.4zM182.3 -94.1h14v3.3h-14zM182.3 -90.8h11.6v3.3h-11.6zM182.3 -87.5h11.1v3.3h-11.1zM182.3 -84.2h14v4.9h-14zM182.3 -79.3h11.4v3.3h-11.4zM182.3 -76h13.8v3.3h-13.8zM182.3 -72.7h11.5v3.3h-11.5zM182.3 -69.4h13.2v6.6h-13.2zM182.3 -62.8h13.5v3.3h-13.5zM182.3 -59.5h13v4.9h-13zM182.3 -54.5h13.7v3.3h-13.7zM182.3 -51.2h13v3.3h-13zM182.3 -47.9h11.1v3.3h-11.1zM182.3 -44.6h11.3v3.3h-11.3zM182.3 -41.3h13.2v4.9h-13.2zM182.3 -36.4h14.3v6.6h-14.3zM182.3 -29.8h13.6v3.3h-13.6zM182.3 -26.5h13.4v4.9h-13.4zM182.3 -21.5h13.7v4.5h-13.7zM223.7 -104h-13.5v3.3h13.5zM223.7 -100.7h-11.6v3.3h11.6zM223.7 -97.4h-15.3v3.3h15.3zM223.7 -94.1h-13.2v4.9h13.2zM223.7 -89.2h-11.8v4.9h11.8zM223.7 -84.2h-11.5v6.6h11.5zM223.7 -77.6h-13.5v3.3h13.5zM223.7 -74.3h-13.9v3.3h13.9zM223.7 -71h-11.5v3.3h11.5zM223.7 -67.7h-11.4v4.9h11.4zM223.7 -62.8h-11.2v3.3h11.2zM223.7 -59.5h-13.5v3.3h13.5zM223.7 -56.2h-12.6v3.3h12.6zM223.7 -52.9h-17.2v3.3h17.2zM223.7 -49.6h-13.5v4.9h13.5zM223.7 -44.6h-13.3v6.6h13.3zM223.7 -38h-18.6v4.9h18.6zM223.7 -33.1h-14.3v3.3h14.3zM223.7 -29.8h-11.3v3.3h11.3zM223.7 -26.5h-13.9v3.3h13.9zM223.7 -23.2h-12.8v3.3h12.8zM223.7 -19.9h-13.5v2.9h13.5zM182.3 -7h6.6v-8.1h-6.6zM188.9 -7h3.3v-8.8h-3.3zM198.8 -7h3.3v-7.6h-3.3zM213.3 -7h3.3v-9.2h-3.3zM219.9 -7h3.8v-7.8h-3.8zM182.3 7h12.4v4.9h-12.4zM182.3 11.9h11.8v4.9h-11.8zM182.3 16.9h14v3.3h-14zM182.3 20.2h16.1v4.9h-16.1zM182.3 25.1h11v3.3h-11zM182.3 28.4h11.6v3.3h-11.6zM182.3 31.8h13.4v4.9h-13.4zM182.3 36.7h12.1v4.9h-12.1zM182.3 41.7h14v6.6h-14zM182.3 48.3h18.5v6.6h-18.5zM182.3 54.9h13v6.6h-13zM182.3 61.5h13.3v3.3h-13.3zM182.3 64.8h13.2v3.3h-13.2zM182.3 68.1h17.2v3.3h-17.2zM182.3 71.4h14.3v3.3h-14.3zM182.3 74.7h15.1v3.3h-15.1zM182.3 78h11.4v3.3h-11.4zM182.3 81.2h11.7v3.3h-11.7zM182.3 84.5h12.6v4.9h-12.6zM182.3 89.5h14.2v3.3h-14.2zM182.3 92.8h13.8v2.2h-13.8zM223.7 7h-13.5v6.6h13.5zM223.7 13.6h-14.4v3.3h14.4zM223.7 16.9h-12.4v4.9h12.4zM223.7 21.8h-13.7v3.3h13.7zM223.7 25.1h-11.8v6.6h11.8zM223.7 31.8h-14.3v3.3h14.3zM223.7 35h-12.5v3.3h12.5zM223.7 38.3h-16.6v6.6h16.6zM223.7 44.9h-13.6v3.3h13.6zM223.7 48.2h-11.4v3.3h11.4zM223.7 51.5h-17.9v6.6h17.9zM223.7 58.1h-12.1v3.3h12.1zM223.7 61.4h-13.4v3.3h13.4zM223.7 64.7h-11.1v3.3h11.1zM223.7 68h-16.3v4.9h16.3zM223.7 73h-14.3v3.3h14.3zM223.7 76.3h-13.1v4.9h13.1zM223.7 81.2h-11v3.3h11zM223.7 84.5h-18v3.3h18zM223.7 87.8h-13.9v3.3h13.9zM223.7 91.1h-14.4v3.9h14.4zM182.3 105h4.6v-10.6h-4.6zM186.9 105h6.6v-8.8h-6.6zM193.5 105h6.6v-10.6h-6.6zM200.1 105h6.6v-8.2h-6.6zM206.7 105h3.3v-8.7h-3.3zM210 105h4.6v-8.7h-4.6zM214.6 105h3.3v-9.2h-3.3zM217.9 105h3.3v-9.1h-3.3zM221.2 105h2.5v-8h-2.5zM182.3 115h14.5v3.3h-14.5zM182.3 118.3h14.3v6.6h-14.3zM182.3 124.9h17v3.3h-17zM182.3 128.2h13.2v4.9h-13.2zM182.3 133.1h11.8v3.3h-11.8zM182.3 136.4h12.1v3.3h-12.1zM182.3 139.8h13.2v3.3h-13.2zM182.3 143.1h12.2v6.6h-12.2zM182.3 149.7h13.7v3.3h-13.7zM182.3 153h14.5v3.3h-14.5zM182.3 156.3h14v3.3h-14zM182.3 159.6h13.7v4.9h-13.7zM182.3 164.5h12.1v6.6h-12.1zM182.3 171.1h14.3v6.6h-14.3zM182.3 177.7h11.3v3.3h-11.3zM182.3 181h12.6v6.6h-12.6zM182.3 187.6h14.2v4.9h-14.2zM182.3 192.6h12v3.3h-12zM182.3 195.9h13.2v3.3h-13.2zM182.3 199.2h12.4v2.5h-12.4zM223.7 115h-15.7v6.6h15.7zM223.7 121.6h-18.3v3.3h18.3zM223.7 124.9h-11.5v6.6h11.5zM223.7 131.5h-11.1v6.6h11.1zM223.7 138.1h-12.1v3.3h12.1zM223.7 141.4h-13.4v4.9h13.4zM223.7 146.3h-18.2v3.3h18.2zM223.7 149.7h-12.4v4.9h12.4zM223.7 154.6h-12.1v3.3h12.1zM223.7 157.9h-13.1v3.3h13.1zM223.7 161.2h-11.1v3.3h11.1zM223.7 164.5h-11.3v6.6h11.3zM223.7 171.1h-13.4v4.9h13.4zM223.7 176.1h-13.1v3.3h13.1zM223.7 179.4h-13.5v6.6h13.5zM223.7 186h-12.9v3.3h12.9zM223.7 189.3h-12.8v6.6h12.8zM223.7 195.9h-18.2v3.3h18.2zM223.7 199.2h-13.2v2h13.2zM185.6 211.5h6.6v-7.7h-6.6zM192.2 211.5h6.6v-10.2h-6.6zM202.1 211.4h3.3v-10.7h-3.3zM205.4 211.3h3.3v-8.7h-3.3zM208.7 211.3h3.3v-10.5h-3.3zM212 211.3h3.3v-8.7h-3.3zM215.3 211.2h4.6v-8.6h-4.6zM219.9 211.2h3.3v-10.1h-3.3zM232.3 -94h12.2v4.9h-12.2zM232.3 -89h14.2v4.9h-14.2zM232.3 -84.1h11.1v3.3h-11.1zM232.3 -80.8h11.7v3.3h-11.7zM232.3 -77.5h14.5v3.3h-14.5zM232.3 -74.2h12.7v6.6h-12.7zM232.3 -67.6h11.5v3.3h-11.5zM232.3 -64.3h12.7v3.3h-12.7zM232.3 -61h13.1v3.3h-13.1zM232.3 -57.7h14.1v3.3h-14.1zM232.3 -54.4h13.7v3.3h-13.7zM232.3 -51.1h14.5v4.9h-14.5zM232.3 -46.2h11.5v3.3h-11.5zM232.3 -42.9h11.5v3.3h-11.5zM232.3 -39.6h12.6v3.3h-12.6zM232.3 -36.3h14.2v4.9h-14.2zM232.3 -31.3h11.1v3.3h-11.1zM232.3 -28h12.8v3.3h-12.8zM232.3 -24.7h19.1v4.9h-19.1zM232.3 -19.8h11.4v3.3h-11.4zM232.3 -16.5h11v3.3h-11zM232.3 -13.2h13.6v6.2h-13.6zM273.7 -94h-13.9v3.3h13.9zM273.7 -90.7h-11.8v3.3h11.8zM273.7 -87.4h-12v3.3h12zM273.7 -84.1h-14.4v3.3h14.4zM273.7 -80.8h-12.9v3.3h12.9zM273.7 -77.5h-11.1v3.3h11.1zM273.7 -74.2h-13.4v3.3h13.4zM273.7 -70.9h-12.1v3.3h12.1zM273.7 -67.6h-12.3v3.3h12.3zM273.7 -64.3h-13.2v3.3h13.2zM273.7 -61h-11.9v6.6h11.9zM273.7 -54.4h-13.9v4.9h13.9zM273.7 -49.5h-13.7v3.3h13.7zM273.7 -46.2h-13v3.3h13zM273.7 -42.9h-12.1v4.9h12.1zM273.7 -37.9h-13.3v3.3h13.3zM273.7 -34.6h-14.5v3.3h14.5zM273.7 -31.3h-11.2v4.9h11.2zM273.7 -26.4h-13.4v3.3h13.4zM273.7 -23.1h-14.2v6.6h14.2zM273.7 -16.5h-12.7v3.3h12.7zM273.7 -13.2h-13v6.2h13zM235.6 -104h6.6v8.2h-6.6zM245.5 -104h3.3v8h-3.3zM248.8 -104h4.6v10.8h-4.6zM253.4 -104h3.3v8.8h-3.3zM256.7 -104h4.6v8h-4.6zM261.3 -104h3.3v8.8h-3.3zM264.6 -104h6.6v9.1h-6.6zM271.2 -104h2.5v8.5h-2.5zM232.3 17h11.6v4.9h-11.6zM232.3 21.9h12.3v3.3h-12.3zM232.3 25.2h12.8v3.3h-12.8zM232.3 28.6h11.7v3.3h-11.7zM232.3 31.9h12.1v3.3h-12.1zM232.3 35.1h11.9v3.3h-11.9zM232.3 38.4h14v6.6h-14zM232.3 45h12v4.9h-12zM232.3 50h17.3v3.3h-17.3zM232.3 53.3h13.1v4.9h-13.1zM232.3 58.2h13v3.3h-13zM232.3 61.5h14v3.3h-14zM232.3 64.8h17.2v3.3h-17.2zM232.3 68.1h12.5v4.9h-12.5zM232.3 73.1h13v3.3h-13zM232.3 76.4h12.7v4.9h-12.7zM232.3 81.3h11.5v4.9h-11.5zM232.3 86.3h13.6v3.3h-13.6zM232.3 89.6h12v3.3h-12zM232.3 92.9h11.4v2.1h-11.4zM273.7 17h-11.1v3.3h11.1zM273.7 20.3h-11.2v3.3h11.2zM273.7 23.6h-11.2v3.3h11.2zM273.7 26.9h-11.5v4.9h11.5zM273.7 31.9h-11.5v3.3h11.5zM273.7 35.1h-11.7v6.6h11.7zM273.7 41.8h-12.1v6.6h12.1zM273.7 48.4h-12.8v3.3h12.8zM273.7 51.6h-11.9v3.3h11.9zM273.7 54.9h-11.9v4.9h11.9zM273.7 59.9h-13.3v3.3h13.3zM273.7 63.2h-11.5v4.9h11.5zM273.7 68.1h-14.2v3.3h14.2zM273.7 71.4h-16.8v3.3h16.8zM273.7 74.7h-11.8v3.3h11.8zM273.7 78h-13.8v3.3h13.8zM273.7 81.3h-13.5v4.9h13.5zM273.7 86.3h-12.5v3.3h12.5zM273.7 89.6h-14.1v3.3h14.1zM273.7 92.9h-14.2v2.1h14.2zM232.3 7h3.3v9.9h-3.3zM245.5 7h3.3v10h-3.3zM248.8 7h6.6v7.8h-6.6zM258.7 7h4.6v10.4h-4.6zM263.3 7h4.6v8h-4.6zM271.2 7h2.5v10.4h-2.5zM232.3 105h3.3v-10.6h-3.3zM235.6 105h3.3v-10h-3.3zM242.2 105h3.3v-8.3h-3.3zM245.5 105h3.3v-7.6h-3.3zM248.8 105h4.6v-8.5h-4.6zM253.4 105h6.6v-8.2h-6.6zM260 105h3.3v-9h-3.3zM263.3 105h4.6v-10.4h-4.6zM267.9 105h3.3v-8.2h-3.3zM271.2 105h2.5v-8.5h-2.5zM232.3 125h14.2v4.9h-14.2zM232.3 129.9h13.1v3.3h-13.1zM232.3 133.2h12.6v3.3h-12.6zM232.3 136.6h12v3.3h-12zM232.3 139.9h12.2v3.3h-12.2zM232.3 143.2h12.2v3.3h-12.2zM232.3 146.5h17.6v3.3h-17.6zM232.3 149.8h12.6v3.3h-12.6zM232.3 153.1h13.1v3.3h-13.1zM232.3 156.4h13v3.3h-13zM232.3 159.7h18.8v3.3h-18.8zM232.3 163h15.3v3.3h-15.3zM232.3 166.3h14.9v4.9h-14.9zM232.3 171.2h16.7v3.3h-16.7zM232.3 174.5h11.1v3.3h-11.1zM232.3 177.8h12.9v3.3h-12.9zM232.3 181.1h12.9v3.3h-12.9zM232.3 184.4h14.3v3.3h-14.3zM232.3 187.7h16.3v6.6h-16.3zM232.3 194.3h12.5v3.3h-12.5zM232.3 197.6h18.4v3.3h-18.4zM232.3 200.9h13.7v3.3h-13.7zM232.3 204.2h11.3v3.3h-11.3zM232.3 207.5h13.2v3.3h-13.2zM273.7 125h-13.8v3.3h13.8zM273.7 128.3h-14.3v3.3h14.3zM273.7 131.6h-13.8v4.9h13.8zM273.7 136.6h-11.5v6.6h11.5zM273.7 143.2h-14.2v3.3h14.2zM273.7 146.5h-13.8v3.3h13.8zM273.7 149.8h-16.6v4.9h16.6zM273.7 154.7h-13.2v3.3h13.2zM273.7 158h-13.5v4.9h13.5zM273.7 163h-12.7v3.3h12.7zM273.7 166.3h-13.9v4.9h13.9zM273.7 171.2h-13.9v3.3h13.9zM273.7 174.5h-12.4v6.6h12.4zM273.7 181.1h-14.4v6.6h14.4zM273.7 187.7h-13.7v3.3h13.7zM273.7 191h-13.1v3.3h13.1zM273.7 194.3h-14.3v4.9h14.3zM273.7 199.3h-13.7v3.3h13.7zM273.7 202.6h-17v3.3h17zM232.3 115h3.3v10.7h-3.3zM235.6 115h4.6v7.5h-4.6zM240.2 115h4.6v10.8h-4.6zM244.8 115h4.6v9.6h-4.6zM249.5 115h4.6v9.4h-4.6zM254.1 115h3.3v10.5h-3.3zM257.4 115h6.6v8.7h-6.6zM264 115h3.3v10.6h-3.3zM267.3 115h4.6v10.3h-4.6zM282.3 -94h14.1v3.3h-14.1zM282.3 -90.7h12.3v3.3h-12.3zM282.3 -87.4h14.4v6.6h-14.4zM282.3 -80.8h12.8v3.3h-12.8zM282.3 -77.5h14.4v3.3h-14.4zM282.3 -74.2h11.6v3.3h-11.6zM282.3 -70.9h13.3v4.9h-13.3zM282.3 -66h13.6v3.3h-13.6zM282.3 -62.7h13.6v4.9h-13.6zM282.3 -57.7h13.2v4.9h-13.2zM282.3 -52.8h13.3v3.3h-13.3zM282.3 -49.5h18.4v4.9h-18.4zM282.3 -44.5h19.8v4.9h-19.8zM282.3 -39.6h12.6v3.3h-12.6zM282.3 -36.3h16.9v3.3h-16.9zM282.3 -33h14.3v3.3h-14.3zM282.3 -29.7h16.6v3.3h-16.6zM282.3 -26.4h12v6.6h-12zM282.3 -19.8h11.1v3.3h-11.1zM282.3 -16.5h13.8v4.9h-13.8zM282.3 -11.5h14.4v4.5h-14.4zM323.7 -94h-13.9v3.3h13.9zM323.7 -90.7h-12.2v3.3h12.2zM323.7 -87.4h-11.2v6.6h11.2zM323.7 -80.8h-15.3v6.6h15.3zM323.7 -74.2h-12.3v4.9h12.3zM323.7 -69.3h-14.3v3.3h14.3zM323.7 -66h-12.4v3.3h12.4zM323.7 -62.7h-12.3v3.3h12.3zM323.7 -59.4h-14.2v3.3h14.2zM323.7 -56.1h-13.2v6.6h13.2zM323.7 -49.5h-12v3.3h12zM323.7 -46.2h-16v6.6h16zM323.7 -39.6h-12v4.9h12zM323.7 -34.6h-11v3.3h11zM323.7 -31.3h-13.1v6.6h13.1zM323.7 -24.7h-18.5v3.3h18.5zM323.7 -21.4h-13.5v4.9h13.5zM323.7 -16.5h-14.4v3.3h14.4zM323.7 -13.2h-12.4v3.3h12.4zM323.7 -9.9h-12.7v2.9h12.7zM282.3 -104h3.3v8h-3.3zM285.6 -104h6.6v10.7h-6.6zM292.2 -104h3.3v8.7h-3.3zM298.8 -104h3.3v10.5h-3.3zM302.1 -104h3.3v8.9h-3.3zM305.4 -104h6.6v10.2h-6.6zM312 -104h3.3v9.9h-3.3zM315.3 -104h3.3v10.6h-3.3zM318.6 -104h3.3v10.4h-3.3zM282.3 7h14.1v3.3h-14.1zM282.3 10.3h13.7v3.3h-13.7zM282.3 13.6h11.7v6.6h-11.7zM282.3 20.2h13v3.3h-13zM282.3 23.5h18.8v3.3h-18.8zM282.3 26.8h12.6v3.3h-12.6zM282.3 30.1h11.2v4.9h-11.2zM282.3 35.1h11.1v6.6h-11.1zM282.3 41.7h11.8v4.9h-11.8zM282.3 46.6h12.9v3.3h-12.9zM282.3 49.9h11.7v6.6h-11.7zM282.3 56.5h11.1v6.6h-11.1zM282.3 63.1h11.9v3.3h-11.9zM282.3 66.4h13v3.3h-13zM282.3 69.7h12.4v6.6h-12.4zM282.3 76.3h14.4v3.3h-14.4zM282.3 79.6h12.7v3.3h-12.7zM282.3 82.9h14.1v4.9h-14.1zM282.3 87.8h11.7v3.3h-11.7zM282.3 91.1h11.3v3.3h-11.3zM282.3 94.4h11.7v3.3h-11.7zM282.3 97.7h11.7v3.3h-11.7zM282.3 101h14.3v3.3h-14.3zM323.7 7h-11.2v6.6h11.2zM323.7 13.6h-13.2v3.3h13.2zM323.7 16.9h-12.2v6.6h12.2zM323.7 23.5h-14.8v3.3h14.8zM323.7 26.8h-11.1v3.3h11.1zM323.7 30.1h-14v3.3h14zM323.7 33.4h-11.3v4.9h11.3zM323.7 38.3h-13.9v3.3h13.9zM323.7 41.6h-11.9v3.3h11.9zM323.7 44.9h-11.1v3.3h11.1zM323.7 48.2h-14.4v3.3h14.4zM323.7 51.5h-14.1v4.9h14.1zM323.7 56.5h-11.7v3.3h11.7zM323.7 59.8h-13.8v4.9h13.8zM323.7 64.7h-11.2v3.3h11.2zM323.7 68h-14v6.6h14zM323.7 74.6h-12.7v6.6h12.7zM323.7 81.2h-11.7v3.3h11.7zM323.7 84.5h-14.1v3.3h14.1zM323.7 87.8h-13v4.9h13zM323.7 92.8h-13v4.9h13zM323.7 97.7h-13.3v4.9h13.3zM323.7 102.7h-12.6v2.3h12.6zM282.3 115h11.2v4.9h-11.2zM282.3 120h13v3.3h-13zM282.3 123.2h16v3.3h-16zM282.3 126.5h14.1v3.3h-14.1zM282.3 129.8h11.2v3.3h-11.2zM282.3 133.2h11.9v6.6h-11.9zM282.3 139.8h14.3v3.3h-14.3zM282.3 143.1h13.8v3.3h-13.8zM282.3 146.4h12.8v6.6h-12.8zM282.3 153h11v4.9h-11zM282.3 157.9h11.3v6.6h-11.3zM282.3 164.5h16v6.6h-16zM282.3 171.1h12.6v6.6h-12.6zM282.3 177.7h11.1v6.6h-11.1zM282.3 184.3h13.5v4.9h-13.5zM282.3 189.2h17.2v4.9h-17.2zM323.7 115h-11.8v3.3h11.8zM323.7 118.3h-12v3.3h12zM323.7 121.6h-13.1v3.3h13.1zM323.7 124.9h-16v3.3h16zM323.7 128.2h-12.3v6.6h12.3zM323.7 134.8h-11.7v6.6h11.7zM323.7 141.4h-13.9v3.3h13.9zM323.7 144.7h-11.5v3.3h11.5zM323.7 148h-14.3v3.3h14.3zM323.7 151.3h-12.1v3.3h12.1zM323.7 154.6h-11.6v3.3h11.6zM323.7 157.9h-13.9v4.9h13.9zM323.7 162.9h-11.9v3.3h11.9zM323.7 166.2h-12.9v3.3h12.9zM323.7 169.5h-13.7v3.3h13.7zM323.7 172.8h-18.2v3.3h18.2zM323.7 176.1h-14.7v3.3h14.7zM323.7 179.4h-12.9v4.9h12.9zM323.7 184.3h-14.2v6.6h14.2zM282.3 205.7h6.6v-10.9h-6.6zM288.9 205.1h3.3v-8.3h-3.3zM292.2 204.8h3.3v-9h-3.3zM298.8 204h3.3v-9.6h-3.3zM302.1 203.7h3.3v-10.1h-3.3zM305.4 203.2h4.6v-8.4h-4.6zM310 202.8h3.3v-10.5h-3.3zM313.3 202.4h3.3v-9.8h-3.3zM316.6 201.9h6.6v-7.7h-6.6zM332.3 -94h14.7v3.3h-14.7zM332.3 -90.7h13.5v3.3h-13.5zM332.3 -87.4h12v6.6h-12zM332.3 -80.8h11.9v3.3h-11.9zM332.3 -77.5h19.3v3.3h-19.3zM332.3 -74.2h11.7v3.3h-11.7zM332.3 -70.9h11.7v3.3h-11.7zM332.3 -67.6h11v3.3h-11zM332.3 -64.3h13.3v3.3h-13.3zM332.3 -61h17.4v3.3h-17.4zM332.3 -57.7h11.3v4.9h-11.3zM332.3 -52.8h11.1v3.3h-11.1zM332.3 -49.5h12.2v3.3h-12.2zM332.3 -46.2h13.8v3.3h-13.8zM332.3 -42.9h13.3v3.3h-13.3zM332.3 -39.6h12.3v3.3h-12.3zM332.3 -36.3h14.1v3.3h-14.1zM332.3 -33h14.1v3.3h-14.1zM332.3 -29.7h13.3v3.3h-13.3zM332.3 -26.4h12.7v3.3h-12.7zM332.3 -23.1h16v3.3h-16zM332.3 -19.8h14.2v2.8h-14.2zM373.7 -94h-11.2v3.3h11.2zM373.7 -90.7h-16.2v4.9h16.2zM373.7 -85.8h-13v4.9h13zM373.7 -80.8h-14.3v4.9h14.3zM373.7 -75.8h-12.8v3.3h12.8zM373.7 -72.5h-11.9v3.3h11.9zM373.7 -69.2h-11.5v4.9h11.5zM373.7 -64.3h-12v3.3h12zM373.7 -61h-14.4v3.3h14.4zM373.7 -57.7h-13.2v3.3h13.2zM373.7 -54.4h-18v3.3h18zM373.7 -51.1h-11.5v4.9h11.5zM373.7 -46.2h-14.3v4.9h14.3zM373.7 -41.2h-13.3v3.3h13.3zM373.7 -37.9h-17v3.3h17zM373.7 -34.6h-14.4v3.3h14.4zM373.7 -31.3h-13v3.3h13zM373.7 -28h-11.6v4.9h11.6zM373.7 -23.1h-12.7v4.9h12.7zM332.3 -104h4.6v8.2h-4.6zM336.9 -104h3.3v9.1h-3.3zM343.5 -104h4.6v10.9h-4.6zM348.1 -104h3.3v8.1h-3.3zM351.4 -104h4.6v7.6h-4.6zM356.1 -104h3.3v8.3h-3.3zM359.4 -104h3.3v10.3h-3.3zM362.7 -104h6.6v9.5h-6.6zM369.3 -104h4.4v8.3h-4.4zM332.3 -7h3.3v-9h-3.3zM338.9 -7h3.3v-10.6h-3.3zM342.2 -7h3.3v-9h-3.3zM345.5 -7h3.3v-9.1h-3.3zM348.8 -7h4.6v-9.5h-4.6zM360 -7h4.6v-9h-4.6zM367.9 -7h3.3v-10.1h-3.3zM332.3 17h13.3v3.3h-13.3zM332.3 20.3h12.7v3.3h-12.7zM332.3 23.6h14.4v3.3h-14.4zM332.3 26.9h11.9v3.3h-11.9zM332.3 30.2h12.4v3.3h-12.4zM332.3 33.5h11.3v3.3h-11.3zM332.3 36.8h11.7v6.6h-11.7zM332.3 43.4h12.2v3.3h-12.2zM332.3 46.7h12.1v3.3h-12.1zM332.3 50h14.4v4.9h-14.4zM332.3 54.9h14.2v4.9h-14.2zM332.3 59.9h12.7v3.3h-12.7zM332.3 63.2h18.1v3.3h-18.1zM332.3 66.5h13.3v4.9h-13.3zM332.3 71.4h13v4.9h-13zM332.3 76.4h13.8v4.9h-13.8zM332.3 81.3h11.4v3.3h-11.4zM332.3 84.6h13.2v3.3h-13.2zM332.3 87.9h11.7v6.6h-11.7zM373.7 17h-15.4v3.3h15.4zM373.7 20.3h-14.1v6.6h14.1zM373.7 26.9h-14v4.9h14zM373.7 31.8h-11.9v3.3h11.9zM373.7 35.1h-13.5v3.3h13.5zM373.7 38.4h-14.1v3.3h14.1zM373.7 41.7h-12.8v4.9h12.8zM373.7 46.7h-14.1v4.9h14.1zM373.7 51.6h-14.1v3.3h14.1zM373.7 54.9h-14v3.3h14zM373.7 58.2h-11.7v6.6h11.7zM373.7 64.8h-13.6v6.6h13.6zM373.7 71.4h-13.5v4.9h13.5zM373.7 76.4h-11.3v3.3h11.3zM373.7 79.7h-12.6v3.3h12.6zM373.7 83h-13.9v3.3h13.9zM373.7 86.3h-11.7v4.9h11.7zM373.7 91.2h-12.6v3.3h12.6zM332.3 7h6.6v9.4h-6.6zM338.9 7h3.3v10h-3.3zM342.2 7h3.3v8.2h-3.3zM345.5 7h4.6v10.7h-4.6zM353.4 7h3.3v7.7h-3.3zM356.7 7h4.6v10.4h-4.6zM361.3 7h3.3v9.3h-3.3zM364.6 7h3.3v9.6h-3.3zM367.9 7h3.3v8.6h-3.3zM371.2 7h2.5v10.8h-2.5zM332.3 105h3.3v-8.2h-3.3zM335.6 105h3.3v-10h-3.3zM338.9 105h3.3v-9.2h-3.3zM342.2 105h3.3v-7.9h-3.3zM345.5 105h3.3v-9h-3.3zM348.8 105h3.3v-9.8h-3.3zM352.1 105h3.3v-10.5h-3.3zM355.4 105h4.6v-8.8h-4.6zM360 105h4.6v-10h-4.6zM364.6 105h3.3v-7.9h-3.3zM367.9 105h4.6v-10.7h-4.6zM332.3 125h12.6v6.6h-12.6zM332.3 131.6h14v3.3h-14zM332.3 134.9h11.3v3.3h-11.3zM332.3 138.2h19.2v3.3h-19.2zM332.3 141.5h13.5v3.3h-13.5zM332.3 144.8h12.4v6.6h-12.4zM332.3 151.4h12.5v4.9h-12.5zM332.3 156.4h12.6v3.3h-12.6zM332.3 159.7h13.6v3.3h-13.6zM332.3 163h14.3v4.9h-14.3zM332.3 167.9h12.4v3.3h-12.4zM332.3 171.2h14.2v3.3h-14.2zM332.3 174.5h11.9v6.6h-11.9zM332.3 181.1h13.4v4.9h-13.4zM332.3 186.1h11.6v6.6h-11.6zM332.3 192.7h15.3v3.3h-15.3zM332.3 196h11v3.3h-11zM373.7 125h-11.1v6.6h11.1zM373.7 131.6h-13.9v3.3h13.9zM373.7 134.9h-13.2v3.3h13.2zM373.7 138.2h-11.8v3.3h11.8zM373.7 141.5h-13.7v4.9h13.7zM373.7 146.5h-18.8v3.3h18.8zM373.7 149.8h-13.8v3.3h13.8zM373.7 153.1h-13.9v3.3h13.9zM373.7 156.4h-18.9v6.6h18.9zM373.7 163h-14.1v3.3h14.1zM373.7 166.3h-11.2v6.6h11.2zM373.7 172.9h-14.3v6.6h14.3zM373.7 179.5h-14v4.9h14zM373.7 184.4h-16.8v3.3h16.8zM373.7 187.7h-16.2v3.3h16.2zM373.7 191h-13.2v3.3h13.2zM336.9 115h3.3v10.6h-3.3zM340.2 115h6.6v10.6h-6.6zM346.8 115h3.3v8.7h-3.3zM350.1 115h3.3v11h-3.3zM353.4 115h6.6v9.1h-6.6zM363.3 115h3.3v8.8h-3.3zM369.9 115h3.3v9.5h-3.3zM382.3 -94h16.6v3.3h-16.6zM382.3 -90.7h12.2v6.6h-12.2zM382.3 -84.1h11.8v6.6h-11.8zM382.3 -77.5h16.9v4.9h-16.9zM382.3 -72.6h12.2v3.3h-12.2zM382.3 -69.3h19.1v3.3h-19.1zM382.3 -66h14.5v6.6h-14.5zM382.3 -59.4h14.2v3.3h-14.2zM382.3 -56.1h12.3v3.3h-12.3zM382.3 -52.8h14.2v3.3h-14.2zM382.3 -49.5h14.3v3.3h-14.3zM382.3 -46.2h15.1v3.3h-15.1zM382.3 -42.9h11.8v3.3h-11.8zM382.3 -39.6h13.7v4.9h-13.7zM382.3 -34.6h11.8v3.3h-11.8zM382.3 -31.3h11.8v6.6h-11.8zM382.3 -24.7h17.4v3.3h-17.4zM382.3 -21.4h12v6.6h-12zM382.3 -14.8h14.3v6.6h-14.3zM423.7 -94h-14.1v3.3h14.1zM423.7 -90.7h-12.6v4.9h12.6zM423.7 -85.8h-13.7v6.6h13.7zM423.7 -79.2h-14v3.3h14zM423.7 -75.9h-11.6v4.9h11.6zM423.7 -70.9h-13.1v3.3h13.1zM423.7 -67.6h-12.7v3.3h12.7zM423.7 -64.3h-14.3v6.6h14.3zM423.7 -57.7h-12.8v3.3h12.8zM423.7 -54.4h-13.5v3.3h13.5zM423.7 -51.1h-13.6v4.9h13.6zM423.7 -46.2h-12.6v4.9h12.6zM423.7 -41.2h-14v6.6h14zM423.7 -34.6h-13.5v3.3h13.5zM423.7 -31.3h-11.5v4.9h11.5zM423.7 -26.4h-11.5v3.3h11.5zM423.7 -23.1h-13.1v4.9h13.1zM423.7 -18.1h-11.5v3.3h11.5zM423.7 -14.8h-11.5v3.3h11.5zM423.7 -11.5h-13.8v3.3h13.8zM382.3 -104h3.3v10.6h-3.3zM385.6 -104h3.3v10.3h-3.3zM388.9 -104h3.3v9.2h-3.3zM392.2 -104h3.3v9.6h-3.3zM395.5 -104h6.6v8.4h-6.6zM405.4 -104h3.3v10.7h-3.3zM408.7 -104h6.6v10.6h-6.6zM382.3 17h13.8v3.3h-13.8zM382.3 20.3h12.5v3.3h-12.5zM382.3 23.6h12.9v3.3h-12.9zM382.3 26.9h11.5v3.3h-11.5zM382.3 30.2h14v3.3h-14zM382.3 33.5h13.5v3.3h-13.5zM382.3 36.8h13.6v3.3h-13.6zM382.3 40.1h13.4v3.3h-13.4zM382.3 43.4h11.6v4.9h-11.6zM382.3 48.3h14.4v3.3h-14.4zM382.3 51.6h12.6v4.9h-12.6zM382.3 56.6h13.5v3.3h-13.5zM382.3 59.9h13.8v3.3h-13.8zM382.3 63.2h13.2v3.3h-13.2zM382.3 66.5h17.9v4.9h-17.9zM382.3 71.4h12.2v3.3h-12.2zM382.3 74.7h14.2v3.3h-14.2zM382.3 78h13.4v3.3h-13.4zM382.3 81.3h14.2v3.3h-14.2zM382.3 84.6h12.3v3.3h-12.3zM382.3 87.9h13.5v3.3h-13.5zM382.3 91.2h14.3v3.8h-14.3zM423.7 17h-11.7v3.3h11.7zM423.7 20.3h-13.8v3.3h13.8zM423.7 23.6h-12.1v6.6h12.1zM423.7 30.2h-12.2v3.3h12.2zM423.7 33.5h-12v6.6h12zM423.7 40.1h-17.6v3.3h17.6zM423.7 43.4h-14.2v3.3h14.2zM423.7 46.7h-11v4.9h11zM423.7 51.6h-17.5v3.3h17.5zM423.7 54.9h-17.6v4.9h17.6zM423.7 59.9h-12.7v3.3h12.7zM423.7 63.2h-11.9v3.3h11.9zM423.7 66.5h-14.3v3.3h14.3zM423.7 69.8h-13.4v4.9h13.4zM423.7 74.7h-14v3.3h14zM423.7 78h-11.2v4.9h11.2zM423.7 83h-14.5v3.3h14.5zM423.7 86.3h-14v3.3h14zM423.7 89.6h-11.1v3.3h11.1zM423.7 92.9h-13.8v2.1h13.8zM382.3 7h3.3v9.1h-3.3zM385.6 7h3.3v8.7h-3.3zM388.9 7h6.6v8h-6.6zM395.5 7h3.3v10.4h-3.3zM398.8 7h3.3v8.1h-3.3zM402.1 7h3.3v10.3h-3.3zM405.4 7h3.3v7.7h-3.3zM412 7h6.6v11h-6.6zM418.6 7h3.3v9.4h-3.3zM382.3 105h4.6v-9h-4.6zM391.5 105h3.3v-8.3h-3.3zM394.8 105h4.6v-9.4h-4.6zM402.8 105h3.3v-7.9h-3.3zM406.1 105h3.3v-8.1h-3.3zM412.7 105h4.6v-8.4h-4.6zM417.3 105h3.3v-9.2h-3.3zM420.6 105h3.1v-8.7h-3.1zM382.3 125h11.5v3.3h-11.5zM382.3 128.3h12.9v3.3h-12.9zM382.3 131.6h12.6v3.3h-12.6zM382.3 134.9h13v4.9h-13zM382.3 139.9h14.3v3.3h-14.3zM382.3 143.2h13.1v3.3h-13.1zM382.3 146.5h13.1v3.3h-13.1zM382.3 149.8h11.7v3.3h-11.7zM382.3 153.1h15v3.3h-15zM382.3 156.4h13.4v3.3h-13.4zM382.3 159.7h17.5v3.3h-17.5zM382.3 163h12.8v6.6h-12.8zM382.3 169.6h11.6v6.6h-11.6zM382.3 176.2h11.8v3.3h-11.8zM382.3 179.5h14.1v3.3h-14.1zM382.3 182.8h12.3v2.2h-12.3zM423.7 125h-13.9v3.3h13.9zM423.7 128.3h-14.1v3.3h14.1zM423.7 131.6h-13.3v4.9h13.3zM423.7 136.6h-13.2v3.3h13.2zM423.7 139.9h-12.3v3.3h12.3zM423.7 143.2h-11.5v3.3h11.5zM423.7 146.5h-13.8v3.3h13.8zM423.7 149.8h-13v3.3h13zM423.7 153.1h-13.6v4.9h13.6zM423.7 158h-11.8v3.3h11.8zM423.7 161.3h-12.3v3.3h12.3zM423.7 164.6h-12.5v4.9h12.5zM423.7 169.6h-13.3v3.3h13.3zM423.7 172.9h-17.5v4.9h17.5zM423.7 177.8h-11.3v2.5h11.3zM382.3 115h3.3v7.8h-3.3zM385.6 115h3.3v10.2h-3.3zM388.9 115h4.6v8h-4.6zM393.5 115h3.3v10.8h-3.3zM396.8 115h3.3v9h-3.3zM400.1 115h3.3v9.2h-3.3zM406.7 115h3.3v7.6h-3.3zM410 115h3.3v10.1h-3.3zM413.3 115h3.3v8.1h-3.3zM416.6 115h3.3v9.8h-3.3zM419.9 115h3.3v9.1h-3.3zM382.3 194.7h3.3v-7.9h-3.3zM385.6 194.3h4.6v-9.9h-4.6zM390.2 193.8h3.3v-8.4h-3.3zM393.5 193.5h3.3v-8.9h-3.3zM396.8 193h4.6v-7.8h-4.6zM401.4 192.6h3.3v-11h-3.3zM404.7 192.2h3.3v-9.9h-3.3zM408 191.8h3.3v-9.8h-3.3zM411.3 191.4h4.6v-9.1h-4.6zM419.3 190.5h4.4v-7.7h-4.4zM432.3 -94h13v3.3h-13zM432.3 -90.7h19v3.3h-19zM432.3 -87.4h13v3.3h-13zM432.3 -84.1h13.9v3.3h-13.9zM432.3 -80.8h12.5v3.3h-12.5zM432.3 -77.5h13.5v3.3h-13.5zM432.3 -74.2h17.1v3.3h-17.1zM432.3 -70.9h14.4v3.3h-14.4zM432.3 -67.6h12.1v3.3h-12.1zM432.3 -64.3h13.1v6.6h-13.1zM432.3 -57.7h12.1v6.6h-12.1zM432.3 -51.1h12.2v3.3h-12.2zM432.3 -47.8h13.3v3.3h-13.3zM432.3 -44.5h13.3v3.3h-13.3zM432.3 -41.2h11.4v6.6h-11.4zM432.3 -34.6h12.8v4.9h-12.8zM432.3 -29.7h12.9v6.6h-12.9zM432.3 -23.1h12.7v3.3h-12.7zM432.3 -19.8h14v3.3h-14zM432.3 -16.5h13.6v4.9h-13.6zM432.3 -11.5h14.4v3.3h-14.4zM473.7 -94h-13.4v3.3h13.4zM473.7 -90.7h-12.4v3.3h12.4zM473.7 -87.4h-13.3v6.6h13.3zM473.7 -80.8h-12.7v3.3h12.7zM473.7 -77.5h-12.3v3.3h12.3zM473.7 -74.2h-11.5v4.9h11.5zM473.7 -69.3h-12.5v4.9h12.5zM473.7 -64.3h-13.2v3.3h13.2zM473.7 -61h-14.2v3.3h14.2zM473.7 -57.7h-15.3v3.3h15.3zM473.7 -54.4h-17.9v3.3h17.9zM473.7 -51.1h-14.5v4.9h14.5zM473.7 -46.2h-11.7v3.3h11.7zM473.7 -42.9h-12.1v3.3h12.1zM473.7 -39.6h-16.4v3.3h16.4zM473.7 -36.3h-11.3v6.6h11.3zM473.7 -29.7h-13.1v3.3h13.1zM473.7 -26.4h-13v3.3h13zM473.7 -23.1h-12.6v6.6h12.6zM473.7 -16.5h-12.5v4.9h12.5zM473.7 -11.5h-14.5v3.3h14.5zM432.3 -104h4.6v9.6h-4.6zM436.9 -104h4.6v9.3h-4.6zM448.1 -104h3.3v10h-3.3zM456.1 -104h3.3v9.1h-3.3zM459.4 -104h6.6v10.2h-6.6zM466 -104h4.6v8.9h-4.6zM432.3 7h14v3.3h-14zM432.3 10.3h11.3v3.3h-11.3zM432.3 13.6h12.6v4.9h-12.6zM432.3 18.6h14.4v3.3h-14.4zM432.3 21.9h11.4v6.6h-11.4zM432.3 28.5h14.1v6.6h-14.1zM432.3 35.1h13v3.3h-13zM432.3 38.4h13.5v3.3h-13.5zM432.3 41.6h12.9v3.3h-12.9zM432.3 44.9h11.4v3.3h-11.4zM432.3 48.2h12.3v3.3h-12.3zM432.3 51.5h11.7v3.3h-11.7zM432.3 54.8h11.8v3.3h-11.8zM432.3 58.1h14.2v4.9h-14.2zM432.3 63.1h11.8v3.3h-11.8zM432.3 66.4h12.7v4.9h-12.7zM432.3 71.3h11.2v3.3h-11.2zM432.3 74.6h13.3v3.3h-13.3zM432.3 77.9h13.3v6.6h-13.3zM432.3 84.5h11.5v3.3h-11.5zM432.3 87.8h12v6.6h-12zM432.3 94.4h13.2v3.3h-13.2zM432.3 97.7h13.4v6.6h-13.4zM473.7 7h-13.6v3.3h13.6zM473.7 10.3h-17.3v4.9h17.3zM473.7 15.2h-11.1v3.3h11.1zM473.7 18.6h-11.9v6.6h11.9zM473.7 25.1h-18.8v3.3h18.8zM473.7 28.4h-13.9v3.3h13.9zM473.7 31.8h-11.6v6.6h11.6zM473.7 38.4h-11.5v3.3h11.5zM473.7 41.6h-18.3v3.3h18.3zM473.7 44.9h-16.4v3.3h16.4zM473.7 48.2h-14.4v4.9h14.4zM473.7 53.2h-13.6v3.3h13.6zM473.7 56.5h-13.3v3.3h13.3zM473.7 59.8h-11.5v6.6h11.5zM473.7 66.4h-13.8v4.9h13.8zM473.7 71.3h-13.6v3.3h13.6zM473.7 74.6h-14.4v3.3h14.4zM473.7 77.9h-12.3v4.9h12.3zM473.7 82.9h-13.2v6.6h13.2zM473.7 89.5h-11.6v3.3h11.6zM473.7 92.8h-13.7v4.9h13.7zM473.7 97.7h-12.8v3.3h12.8zM473.7 101h-11.9v3.3h11.9zM432.3 115h12.7v3.3h-12.7zM432.3 118.3h12.1v6.6h-12.1zM432.3 124.9h13.9v3.3h-13.9zM432.3 128.2h14.1v6.6h-14.1zM432.3 134.8h14v3.3h-14zM432.3 138.1h12.5v4.9h-12.5zM432.3 143h11.4v4.9h-11.4zM432.3 148h12.1v6.6h-12.1zM432.3 154.6h11.5v4.9h-11.5zM432.3 159.5h11.6v6.6h-11.6zM432.3 166.1h12.8v3.3h-12.8zM432.3 169.4h14v3.3h-14zM432.3 172.7h12.5v6.6h-12.5zM473.7 115h-13.1v3.3h13.1zM473.7 118.3h-12.3v3.3h12.3zM473.7 121.6h-11.6v3.3h11.6zM473.7 124.9h-18.9v3.3h18.9zM473.7 128.2h-11.7v3.3h11.7zM473.7 131.5h-17.3v3.3h17.3zM473.7 134.8h-13.8v3.3h13.8zM473.7 138.1h-19v3.3h19zM473.7 141.4h-13.7v4.9h13.7zM473.7 146.4h-12.1v3.3h12.1zM473.7 149.7h-17.9v6.6h17.9zM473.7 156.3h-13.4v6.6h13.4zM473.7 162.9h-12.7v6.6h12.7zM473.7 169.5h-13.9v4.9h13.9zM432.3 189.1h3.3v-9.1h-3.3zM442.2 187.8h6.6v-7.9h-6.6zM456.7 186.4h3.3v-9.2h-3.3zM467.9 185.2h3.3v-9.7h-3.3zM471.2 184.8h2.5v-8.9h-2.5zM482.3 -94h12.1v4.9h-12.1zM482.3 -89h13.3v3.3h-13.3zM482.3 -85.8h12.9v3.3h-12.9zM482.3 -82.5h13.2v3.3h-13.2zM482.3 -79.2h13.5v3.3h-13.5zM482.3 -75.9h13.2v3.3h-13.2zM482.3 -72.6h12.6v3.3h-12.6zM482.3 -69.3h12.5v4.9h-12.5zM482.3 -64.3h13.3v3.3h-13.3zM482.3 -61h12.9v4.9h-12.9zM482.3 -56.1h12.6v6.6h-12.6zM482.3 -49.5h12.4v3.3h-12.4zM482.3 -46.2h12.8v3.3h-12.8zM482.3 -42.9h11.8v3.3h-11.8zM482.3 -39.6h13.1v4.9h-13.1zM482.3 -34.6h12.5v3.3h-12.5zM482.3 -31.3h11.4v3.3h-11.4zM482.3 -28h12.3v3.3h-12.3zM482.3 -24.7h11.5v3.3h-11.5zM482.3 -21.4h12.9v3.3h-12.9zM524 -94h-13.9v3.3h13.9zM524 -90.7h-12.1v3.3h12.1zM524 -87.4h-11.3v6.6h11.3zM524 -80.8h-14.9v4.9h14.9zM524 -75.9h-13.1v6.6h13.1zM524 -69.3h-12v3.3h12zM524 -66h-13v3.3h13zM524 -62.7h-16.8v3.3h16.8zM524 -59.4h-11.4v3.3h11.4zM524 -56.1h-12.1v6.6h12.1zM524 -49.5h-14.4v6.6h14.4zM524 -42.9h-11.9v4.9h11.9zM524 -37.9h-11.5v6.6h11.5zM524 -31.3h-18.4v3.3h18.4zM524 -28h-13.4v3.3h13.4zM524 -24.7h-18.1v4.9h18.1zM524 -19.8h-13.2v2.8h13.2zM482.3 -104h4.6v8.2h-4.6zM486.9 -104h4.6v9h-4.6zM491.5 -104h3.3v9.5h-3.3zM494.8 -104h3.3v9.5h-3.3zM498.1 -104h6.6v8.9h-6.6zM511.3 -104h4.6v7.8h-4.6zM516 -104h3.3v10.8h-3.3zM485.6 -7h4.6v-8.6h-4.6zM496.8 -7h3.3v-8h-3.3zM500.1 -7h6.6v-9.2h-6.6zM506.7 -7h3.3v-8h-3.3zM510 -7h6.6v-10.5h-6.6zM519.9 -7h3.3v-8.4h-3.3zM482.3 17h12.6v4.9h-12.6zM482.3 21.9h11.3v4.9h-11.3zM482.3 26.9h15.9v4.9h-15.9zM482.3 31.8h11.3v6.6h-11.3zM482.3 38.4h12.3v3.3h-12.3zM482.3 41.7h13.1v3.3h-13.1zM482.3 45h13.4v6.6h-13.4zM482.3 51.6h12.9v4.9h-12.9zM482.3 56.6h11.3v4.9h-11.3zM482.3 61.5h14.2v3.3h-14.2zM482.3 64.8h11.2v6.6h-11.2zM482.3 71.4h12.2v6.6h-12.2zM482.3 78h14.3v3.3h-14.3zM482.3 81.3h12.6v4.9h-12.6zM482.3 86.3h16.6v3.3h-16.6zM482.3 89.6h11.7v3.3h-11.7zM482.3 92.9h14.5v2.1h-14.5zM524 17h-11.6v3.3h11.6zM524 20.3h-16.8v3.3h16.8zM524 23.6h-11.3v4.9h11.3zM524 28.6h-13.1v3.3h13.1zM524 31.9h-18v3.3h18zM524 35.1h-13.1v3.3h13.1zM524 38.4h-19.8v3.3h19.8zM524 41.7h-12.7v4.9h12.7zM524 46.7h-13.1v3.3h13.1zM524 50h-13.2v3.3h13.2zM524 53.3h-15.2v3.3h15.2zM524 56.6h-12.5v3.3h12.5zM524 59.9h-13.1v3.3h13.1zM524 63.2h-14.1v3.3h14.1zM524 66.5h-11v3.3h11zM524 69.8h-17.2v3.3h17.2zM524 73.1h-12.2v6.6h12.2zM524 79.7h-14.1v6.6h14.1zM524 86.3h-14.1v3.3h14.1zM524 89.6h-13.2v5.4h13.2zM482.3 7h6.6v8.5h-6.6zM488.9 7h3.3v10h-3.3zM492.2 7h3.3v8.4h-3.3zM498.8 7h3.3v10.4h-3.3zM508.7 7h3.3v8h-3.3zM512 7h3.3v9.3h-3.3zM488.9 105h3.3v-10.3h-3.3zM498.8 105h3.3v-9.4h-3.3zM502.1 105h3.3v-7.7h-3.3zM505.4 105h4.6v-8.6h-4.6zM510 105h3.3v-7.9h-3.3zM513.3 105h4.6v-8h-4.6zM517.9 105h3.3v-10.8h-3.3zM521.2 105h2.8v-7.5h-2.8zM482.3 115h11.6v3.3h-11.6zM482.3 118.3h14.4v6.6h-14.4zM482.3 124.9h12.1v3.3h-12.1zM482.3 128.2h13v3.3h-13zM482.3 131.5h11.6v3.3h-11.6zM482.3 134.8h11.8v3.3h-11.8zM482.3 138.1h15.4v3.3h-15.4zM482.3 141.4h13.4v3.3h-13.4zM482.3 144.7h11.4v6.6h-11.4zM482.3 151.3h11.3v3.3h-11.3zM482.3 154.6h12.4v3.3h-12.4zM482.3 157.9h14.1v4.9h-14.1zM482.3 162.9h12.4v4.9h-12.4zM482.3 167.8h13.5v6.6h-13.5zM482.3 174.4h14v6.6h-14zM482.3 181h12v2.9h-12zM524 115h-12.6v3.3h12.6zM524 118.3h-15.7v4.9h15.7zM524 123.2h-14v3.3h14zM524 126.5h-11.8v3.3h11.8zM524 129.8h-17.2v3.3h17.2zM524 133.2h-11.4v3.3h11.4zM524 136.5h-13.3v3.3h13.3zM524 139.8h-12.1v6.6h12.1zM524 146.4h-14.2v3.3h14.2zM524 149.7h-13.2v4.9h13.2zM524 154.6h-14.1v3.3h14.1zM524 157.9h-12.9v3.3h12.9zM524 161.2h-11.1v3.3h11.1zM524 164.5h-17.9v3.3h17.9zM524 167.8h-11.7v3.3h11.7zM524 171.1h-14.6v4.9h14.6zM524 176.1h-13.6v5.5h13.6z" fill="#d8cec7" stroke="#c0b0a4" stroke-width=".7"/>
<path d="M234 40h37v31h-37z" fill="#ffffe5" stroke="#f5eeb0" stroke-width=".8"/>
<path d="M254 42h16v11h-16zM258 56h12v12h-12z" fill="#d8cec7" stroke="#c0b0a4" stroke-width=".6"/>
<path d="M186 151h38v19h-38z" fill="#d8cec7" stroke="#c0b0a4" stroke-width=".6"/>
<path d="M206 116h17v31h-17z" fill="#ececec" stroke="#f2c0b8" stroke-width="1.5"/><path d="M209 119h10v22h-10z" fill="none" stroke="#fff" stroke-width="1.500"/>
<path d="M28 -120V220.3M78 -120V219.7M128 -120V219.2M178 -120V218.6M228 -120V218.1M278 -120V213.5M328 -120V208.0M378 -120V202.4M428 -120V196.8M478 -120V191.2" stroke="#d0ccc8" stroke-width="5.8" fill="none"/>
<path d="M-30 110H531" stroke="#d0ccc8" stroke-width="7.6" fill="none"/>
<path d="M-30 0H540" stroke="#d0ccc8" stroke-width="11.4" fill="none"/>
<path d="M531 -120V190" stroke="#d0ccc8" stroke-width="10.8" fill="none"/>
<path d="M28 -120V220.3M78 -120V219.7M128 -120V219.2M178 -120V218.6M228 -120V218.1M278 -120V213.5M328 -120V208.0M378 -120V202.4M428 -120V196.8M478 -120V191.2" stroke="#ffffff" stroke-width="4.6" fill="none"/>
<path d="M-30 110H531" stroke="#ffffff" stroke-width="6.2" fill="none"/>
<path d="M-30 0H540" stroke="#ffffff" stroke-width="10" fill="none"/>
<path d="M531 -120V190" stroke="#ffffff" stroke-width="9.4" fill="none"/>
</g>
<g transform="translate(555 272) rotate(-8)">
<path d="M5.2 -25.8h11.5v5.4h-11.5zM69.8 -25.8h-13v7.2h13zM5.2 -35.8h5v9.2h-5zM10.2 -35.8h5v9.2h-5zM15.3 -35.8h7.2v7.7h-7.2zM22.5 -35.8h3.6v8.5h-3.6zM29.7 -35.8h3.6v8.5h-3.6zM33.3 -35.8h7.2v7.8h-7.2zM40.5 -35.8h3.6v8.2h-3.6zM44.1 -35.8h3.6v10.7h-3.6zM47.7 -35.8h3.6v8h-3.6zM51.3 -35.8h3.6v8.3h-3.6zM54.9 -35.8h3.6v8.6h-3.6zM58.5 -35.8h5v8.5h-5zM5.2 -7.2h3.6v-8.1h-3.6zM17.4 -7.2h3.6v-9.8h-3.6zM26.1 -7.2h3.6v-10.9h-3.6zM29.7 -7.2h3.6v-9.7h-3.6zM33.3 -7.2h3.6v-8.8h-3.6zM44.1 -7.2h3.6v-9.9h-3.6zM52.7 -7.2h3.6v-8.3h-3.6zM56.3 -7.2h3.6v-10h-3.6zM59.9 -7.2h3.6v-9.2h-3.6zM67.1 -7.2h2.7v-10.5h-2.7zM5.2 -72.8h9.6v7.2h-9.6zM5.2 -65.6h11.8v5.4h-11.8zM69.8 -72.8h-11.4v5.4h11.4zM69.8 -62h-10.3v3.8h10.3zM5.2 -48.2h3.6v-8.5h-3.6zM8.8 -48.2h3.6v-9.1h-3.6zM12.4 -48.2h7.2v-8.2h-7.2zM19.6 -48.2h7.2v-8.1h-7.2zM30.4 -48.2h5v-7.8h-5zM39 -48.2h3.6v-8.1h-3.6zM42.6 -48.2h3.6v-10.1h-3.6zM49.8 -48.2h3.6v-9.3h-3.6zM53.4 -48.2h3.6v-9.1h-3.6zM60.6 -48.2h7.2v-9.8h-7.2zM82.2 -67.8h10.3v3.6h-10.3zM82.2 -64.2h10.7v5.4h-10.7zM82.2 -58.8h11.3v3.6h-11.3zM82.2 -55.2h9.9v3.6h-9.9zM82.2 -51.6h16.7v3.6h-16.7zM82.2 -48h11.3v5.4h-11.3zM82.2 -42.6h12.7v3.6h-12.7zM82.2 -39h11.2v7.2h-11.2zM82.2 -31.8h17.3v3.6h-17.3zM82.2 -28.2h12v3.6h-12zM82.2 -24.6h11.2v7.2h-11.2zM109.8 -67.8h-10.2v3.6h10.2zM109.8 -64.2h-14.5v5.4h14.5zM109.8 -58.8h-9.9v3.6h9.9zM109.8 -55.2h-12.8v7.2h12.8zM109.8 -48h-12.5v7.2h12.5zM109.8 -40.8h-14.6v3.6h14.6zM109.8 -37.2h-16.2v5.4h16.2zM109.8 -31.8h-11.4v5.4h11.4zM109.8 -26.4h-11.1v3.6h11.1zM109.8 -22.8h-9.8v3.6h9.8zM82.2 -7.2h3.6v-9.5h-3.6zM85.8 -7.2h3.6v-7.8h-3.6zM93 -7.2h3.6v-9.7h-3.6zM96.6 -7.2h5v-10.3h-5zM105.2 -7.2h3.6v-8.1h-3.6zM122.2 -67.8h11.9v3.6h-11.9zM122.2 -60.6h15v3.6h-15zM122.2 -57h11v7.2h-11zM122.2 -49.8h9.6v3.6h-9.6zM122.2 -46.2h10.4v3.6h-10.4zM122.2 -42.6h10.2v3.6h-10.2zM122.2 -39h11.2v7.2h-11.2zM122.2 -31.8h11.9v3.6h-11.9zM122.2 -28.2h11.5v3.6h-11.5zM122.2 -24.6h10v3.6h-10zM122.2 -21h11.3v3.6h-11.3zM147.8 -67.8h-12.8v3.6h12.8zM147.8 -64.2h-11.1v3.6h11.1zM147.8 -60.6h-12.5v7.2h12.5zM147.8 -49.8h-9.8v3.6h9.8zM147.8 -46.2h-16.6v3.6h16.6zM147.8 -42.6h-11.8v5.4h11.8zM147.8 -37.2h-10.6v3.6h10.6zM147.8 -33.6h-11.9v3.6h11.9zM147.8 -30h-10.7v5.4h10.7zM147.8 -21h-16v3.6h16zM122.2 -7.2h3.6v-10.2h-3.6zM125.8 -7.2h7.2v-8h-7.2zM133 -7.2h3.6v-9.6h-3.6zM136.6 -7.2h5v-9h-5zM141.6 -7.2h3.6v-9h-3.6zM145.2 -7.2h2.6v-8.3h-2.6zM5.2 17.2h10.9v7.2h-10.9zM5.2 24.4h11.6v3.6h-11.6zM5.2 28h10.9v3.6h-10.9zM5.2 31.6h9.6v7.2h-9.6zM5.2 38.8h12.8v3.6h-12.8zM5.2 42.4h12.7v4.4h-12.7zM69.8 17.2h-10.3v3.6h10.3zM69.8 20.8h-9.9v5.4h9.9zM69.8 26.2h-11.6v3.6h11.6zM69.8 29.8h-12.9v5.4h12.9zM69.8 35.2h-12.3v3.6h12.3zM69.8 38.8h-12.8v5.4h12.8zM69.8 44.2h-11.6v2.6h11.6zM5.2 7.2h3.6v10h-3.6zM8.8 7.2h3.6v9h-3.6zM12.4 7.2h3.6v8.6h-3.6zM16 7.2h5v10.5h-5zM21 7.2h7.2v10.8h-7.2zM28.2 7.2h3.6v9.6h-3.6zM31.8 7.2h3.6v10.8h-3.6zM35.4 7.2h3.6v8.7h-3.6zM39 7.2h3.6v8.6h-3.6zM42.6 7.2h3.6v8.6h-3.6zM46.2 7.2h7.2v10.9h-7.2zM53.4 7.2h3.6v9.6h-3.6zM57 7.2h3.6v10h-3.6zM60.6 7.2h3.6v9h-3.6zM64.2 7.2h5.6v8.2h-5.6zM8.8 56.8h3.6v-10.4h-3.6zM12.4 56.8h3.6v-9.2h-3.6zM16 56.8h5v-8.8h-5zM21 56.8h3.6v-10.7h-3.6zM24.6 56.8h3.6v-10.7h-3.6zM28.2 56.8h3.6v-8.8h-3.6zM42.6 56.8h5v-9.6h-5zM47.7 56.8h3.6v-8.7h-3.6zM51.3 56.8h7.2v-9.9h-7.2zM58.5 56.8h5v-10.9h-5zM63.5 56.8h3.6v-10.4h-3.6zM67.1 56.8h2.7v-9.6h-2.7zM82.2 17.2h12.3v2.6h-12.3zM147.8 17.2h-12.6v2.6h12.6zM82.2 7.2h3.6v7.6h-3.6zM85.8 7.2h7.2v9.3h-7.2zM100.2 7.2h3.6v10.9h-3.6zM103.8 7.2h3.6v10.5h-3.6zM107.4 7.2h3.6v10.5h-3.6zM111 7.2h3.6v10.2h-3.6zM114.6 7.2h7.2v7.9h-7.2zM125.4 7.2h7.2v9.9h-7.2zM132.6 7.2h3.6v9.6h-3.6zM139.8 7.2h3.6v8.8h-3.6zM143.4 7.2h4.4v9h-4.4zM82.2 29.8h3.6v-8.1h-3.6zM85.8 29.8h7.2v-8.1h-7.2zM93 29.8h3.6v-7.6h-3.6zM96.6 29.8h3.6v-9.2h-3.6zM112.4 29.8h5v-8.8h-5zM117.5 29.8h3.6v-8.6h-3.6zM121.1 29.8h3.6v-7.7h-3.6zM124.7 29.8h3.6v-8.5h-3.6zM128.3 29.8h3.6v-8.1h-3.6zM131.9 29.8h5v-9.4h-5zM136.9 29.8h3.6v-8h-3.6zM140.5 29.8h3.6v-8.1h-3.6zM144.1 29.8h3.6v-9.4h-3.6zM5.2 78.2h10.8v7.2h-10.8zM5.2 85.4h12.8v7.2h-12.8zM5.2 92.6h11.4v3.6h-11.4zM5.2 96.2h11.5v5.6h-11.5zM69.8 78.2h-10.6v3.6h10.6zM69.8 81.8h-10.1v7.2h10.1zM69.8 89h-12.6v5.4h12.6zM69.8 94.4h-10.5v3.6h10.5zM69.8 98h-10v3.6h10zM5.2 68.2h5v7.7h-5zM10.2 68.2h3.6v9.3h-3.6zM17.4 68.2h3.6v9.4h-3.6zM24.6 68.2h7.2v9.1h-7.2zM35.4 68.2h3.6v9.9h-3.6zM39 68.2h5v10.3h-5zM44.1 68.2h7.2v10.7h-7.2zM51.3 68.2h3.6v9.5h-3.6zM54.9 68.2h3.6v8.4h-3.6zM62.1 68.2h5v10.3h-5zM5.2 111.8h3.6v-10h-3.6zM8.8 111.8h3.6v-10.6h-3.6zM12.4 111.8h3.6v-9.3h-3.6zM16 111.8h7.2v-9.2h-7.2zM23.2 111.8h3.6v-10.4h-3.6zM26.8 111.8h3.6v-8.6h-3.6zM35.4 111.8h3.6v-10.6h-3.6zM39 111.8h7.2v-9.5h-7.2zM46.2 111.8h7.2v-9.8h-7.2zM53.4 111.8h5v-9.4h-5zM58.5 111.8h3.6v-10h-3.6zM62.1 111.8h5v-11h-5zM67.1 111.8h2.7v-7.9h-2.7zM82.2 51.2h10.9v3.6h-10.9zM82.2 54.8h11.1v5.4h-11.1zM82.2 67.4h11.6v7.2h-11.6zM82.2 74.6h9.8v3.6h-9.8zM82.2 78.2h11.4v3.6h-11.4zM82.2 85.4h10.7v3.6h-10.7zM82.2 89h11.3v3.6h-11.3zM82.2 92.6h12v7.2h-12zM131.8 51.2h-12v7.2h12zM131.8 58.4h-16.7v5.4h16.7zM131.8 63.8h-12.5v3.6h12.5zM131.8 67.4h-10.3v5.4h10.3zM131.8 80h-11.5v3.6h11.5zM131.8 83.6h-9.9v5.4h9.9zM131.8 89h-12v3.6h12zM131.8 92.6h-12.9v3.6h12.9zM131.8 96.2h-12.9v3.6h12.9zM85.8 41.2h3.6v8.3h-3.6zM89.4 41.2h5v10.8h-5zM94.4 41.2h3.6v7.8h-3.6zM98 41.2h7.2v9.5h-7.2zM105.2 41.2h3.6v9.4h-3.6zM117.5 41.2h3.6v7.6h-3.6zM121.1 41.2h3.6v8.8h-3.6zM124.7 41.2h7.1v9.4h-7.1zM82.2 111.8h7.2v-7.8h-7.2zM89.4 111.8h3.6v-9.9h-3.6zM93 111.8h3.6v-10.9h-3.6zM96.6 111.8h5v-8.3h-5zM112.4 111.8h7.2v-10.4h-7.2zM119.6 111.8h5v-10.5h-5zM124.7 111.8h5v-9.5h-5zM144.2 41.2h12.9v3.6h-12.9zM144.2 44.8h12.3v7.2h-12.3zM144.2 52h10.9v3.6h-10.9zM144.2 55.6h11.9v5.4h-11.9zM144.2 61h10.4v7.2h-10.4zM144.2 68.2h18.3v2.6h-18.3zM120.2 84.2h3.6v9h-3.6zM123.8 84.2h3.6v7.9h-3.6zM127.4 84.2h5v7.8h-5zM132.4 84.2h3.6v8.3h-3.6zM136 84.2h5v7.9h-5zM141.1 84.2h5v9.2h-5zM123.8 111.8h5v-8.6h-5zM128.8 111.8h5v-7.9h-5zM133.9 111.8h3.6v-10.7h-3.6zM137.5 111.8h3.6v-8.3h-3.6zM144.7 111.8h3.1v-10.2h-3.1zM5.2 139.6h11.6v5.4h-11.6zM5.2 145h14.9v3.6h-14.9zM5.2 148.6h10.8v7.2h-10.8zM69.8 134.2h-11.9v3.6h11.9zM69.8 137.8h-11.2v5.4h11.2zM69.8 143.2h-10.7v3.6h10.7zM69.8 146.8h-9.9v3.6h9.9zM69.8 150.4h-12.8v5.4h12.8zM5.2 124.2h3.6v9.5h-3.6zM8.8 124.2h7.2v7.6h-7.2zM23.2 124.2h3.6v10.5h-3.6zM26.8 124.2h5v8.2h-5zM31.8 124.2h7.2v10.8h-7.2zM49.8 124.2h7.2v9.8h-7.2zM57 124.2h3.6v10.3h-3.6zM60.6 124.2h3.6v10.9h-3.6zM5.2 165.8h5v-10.4h-5zM13.8 165.8h7.2v-8h-7.2zM21 165.8h3.6v-10.4h-3.6zM24.6 165.8h5v-8.4h-5zM29.7 165.8h7.2v-8.5h-7.2zM36.9 165.8h3.6v-10.2h-3.6zM44.1 165.8h3.6v-10.5h-3.6zM56.3 165.8h3.6v-8.9h-3.6zM82.2 134.2h9.9v5.4h-9.9zM82.2 139.6h11.3v3.6h-11.3zM82.2 143.2h13v7.2h-13zM82.2 150.4h12.1v3.6h-12.1zM120.8 143.2h-11.8v3.6h11.8zM120.8 146.8h-13.4v5.4h13.4zM120.8 152.2h-11.1v3.6h11.1zM82.2 124.2h3.6v10.5h-3.6zM85.8 124.2h5v8.9h-5zM90.8 124.2h7.2v7.8h-7.2zM98 124.2h3.6v7.9h-3.6zM105.2 124.2h3.6v9.7h-3.6zM108.8 124.2h3.6v7.9h-3.6zM112.4 124.2h7.2v9.7h-7.2zM82.2 165.8h5v-8.4h-5zM87.2 165.8h3.6v-8.7h-3.6zM95.9 165.8h3.6v-10.9h-3.6zM99.5 165.8h5v-8.6h-5zM104.5 165.8h7.2v-8.6h-7.2zM111.7 165.8h7.2v-9.5h-7.2zM133.2 134.2h9.5v7.2h-9.5zM133.2 141.4h13v3.6h-13zM133.2 145h10.1v3.6h-10.1zM133.2 148.6h10.8v5.2h-10.8zM149.8 134.2h-11.9v3.6h11.9zM149.8 137.8h-10.8v3.6h10.8zM149.8 141.4h-10.6v3.6h10.6zM149.8 145h-9.8v3.6h9.8zM149.8 148.6h-11.2v3.6h11.2zM133.2 124.2h7.2v11h-7.2zM140.4 124.2h3.6v9.7h-3.6zM144 124.2h3.6v9.7h-3.6zM147.6 124.2h2.2v9.8h-2.2zM136.8 163.8h3.6v-10.2h-3.6zM140.4 163.8h3.6v-7.9h-3.6z" fill="#d8cec7" stroke="#c0b0a4" stroke-width=".7"/>
<path d="M-2 0H160M-2 -42H74M-2 62H76M76 35H152M116 77H152M-2 118H175M76 -80V172M116 -80V0M138 35V77M127 118V172" stroke="#d0ccc8" stroke-width="5.6" fill="none"/>
<path d="M-2 0H160" stroke="#d0ccc8" stroke-width="10.4" fill="none"/>
<circle cx="114" cy="77" r="5.2" fill="#ffffff" stroke="#d0ccc8" stroke-width=".7"/>
<path d="M-2 0H160M-2 -42H74M-2 62H76M76 35H152M116 77H152M-2 118H175M76 -80V172M116 -80V0M138 35V77M127 118V172" stroke="#ffffff" stroke-width="4.4" fill="none"/>
<path d="M-2 0H160" stroke="#ffffff" stroke-width="9" fill="none"/>
</g>
<path d="M719 257l28-5v100l-14 3z" fill="#d8cec7" stroke="#c0b0a4" stroke-width=".7"/>
<path d="M714 247l33-6v8l-31 6z" fill="#ffffe5"/>
<path d="M742 395l5-1v50l-2 0z" fill="#d8cec7"/>
<path d="M14 509.5L270 492.5 510 452.5 565 446.5 733 419.5" stroke="#b9bd72" stroke-width="9.6" fill="none"/>
<path d="M701 210L733 395 738 425 748 478" stroke="#b9bd72" stroke-width="8.6" fill="none"/>
<path d="M14 509.5L270 492.5 510 452.5 565 446.5 733 419.5" stroke="#f7fabf" stroke-width="8.2" fill="none"/>
<path d="M701 210L733 395 738 425 748 478" stroke="#f7fabf" stroke-width="7.200" fill="none"/>
<path d="M557.5 440L559.5 452" stroke="#ffffff" stroke-width="9.4" fill="none"/>
<path d="M377.5 520L397.5 522.5L407.5 532.5L427.5 540L427.5 546.2L410 538.8L390 532.5L377.5 525z" fill="#cdebb0" />
<path d="M327.5 563.8L340 560L347.5 565L350 572.5L366.2 575L372.5 580L330 577.5z" fill="#cdebb0" />
<path d="M328.5 563.6L337.6 560.9L352.2 569.1L377.7 576.4L392.3 574.6L385 583.7L359.5 574.6L341.2 570.9z" fill="#cdebb0" />
<path d="M374.1 722.4L410.6 706L414.2 715.1L377.7 726.1z" fill="#cdebb0" />
<path d="M448 581.9L454.4 576.4L505.5 574.6L510 578.2L510 587.4L487.2 591L454.4 593.8L448 589.2z" fill="#c9e9b9" />
<path d="M583.3 594.1L612.8 592.1L614.7 603.9L599 617.6L595.1 625.5L583.3 623.5L581.4 603.9z" fill="#cdebb0" />
<path d="M595.1 717.7L610.8 707.9L622.6 715.7L620.6 739.3L546.1 739.3L546.1 731.4L583.3 725.5z" fill="#cdebb0" />
<path d="M497 576.4L504.8 574.4L510.7 580.3L506.8 588.2L497 589.2z" fill="#c9e9b9" />
<path d="M512.7 550.9L522.5 548.9L526.4 552.8L516.6 556.8z" fill="#c9e9b9" />
<path d="M20 640.8L36.2 650.8L55 672L45 692L36.2 709.5L26.2 717L20 717z" fill="#c9e9b9" />
<path d="M161.2 592.5L178.8 561.2L195 610z" fill="#cdebb0" />
<circle cx="128.500" cy="597" r="5" fill="#aad3df"/><circle cx="136.250" cy="660.750" r="5.600" fill="#aad3df"/><circle cx="155" cy="644.750" r="2.400" fill="#aad3df"/><circle cx="116.300" cy="679" r="2.400" fill="#aad3df"/>
<path d="M381.500 647.500Q388 642.500 405 651T445 654.500Q447 661 424 664T384 651.500z" fill="#aad3df"/>
<path d="M390.500 641Q396 636.500 414 647Q440 640 450 647T449 664Q435 671 418 664.500" fill="none" stroke="#6f8f7f" stroke-width=".7"/>
<path d="M313.9 736.1L326.6 731.5L359.5 725.1L359.5 727.9L328.5 734.3L319.3 737.9z" fill="#aad3df" />
<path d="M675.1 485L701.4 479.4L702.6 486.9L676.4 491.9z" fill="#8fd8c8" />
<path d="M139 516l21-2 1 6-5 1-3 3-8-1-6-1z" fill="#c8f7dc" stroke="#9fdcbc" stroke-width=".5"/>
<ellipse cx="297.500" cy="537" rx="4.500" ry="11" transform="rotate(14 297.500 537)" fill="none" stroke="#9fd6d2" stroke-width=".8"/>
<path d="M37.800 622l58.600-52 23.200 29-22 19-8-8-24 38z" fill="#d8cec7" stroke="#c0b0a4" stroke-width=".6"/>
<path d="M152.500 719l62.500-57 36.200 40-57.500 52.500z" fill="#d8cec7" stroke="#c0b0a4" stroke-width=".6"/>
<path d="M456 537h38v9h-8v6h-22v-6h-8zM443 543h5v5h-5z" fill="#d8cec7" stroke="#c0b0a4" stroke-width=".6"/>
<path d="M419.7 740.7L456.2 732.4L458 737.9L454.4 739.7L465.3 753.4L458 757.1L450.7 742.5L421.5 748.9z" fill="#d8cec7" stroke="#c0b0a4" stroke-width=".6"/>
<path d="M497 702L504.8 682.4L508.8 672.6L512.7 674.5L506.8 702L500.9 705.9z" fill="#d8cec7" stroke="#c0b0a4" stroke-width=".6"/>
<path d="M720.7 576.4L740.3 564.6L744.3 570.5L728.6 580.3L738.4 584.2L744.3 590.1L726.6 598z" fill="#d8cec7" stroke="#c0b0a4" stroke-width=".6"/>
<path d="M75 697L78.8 695.8L96.2 717L93.8 718.9z" fill="#d8cec7" stroke="#c0b0a4" stroke-width=".6"/>
<path d="M744 700h3v50h-6z" fill="#d5f0ee"/>
<path d="M86.2 683.2L107.5 674.5L128.8 693.2L107.5 710.8z" fill="#dfdfe8" stroke="#c8c8d8" stroke-width=".5"/>
<path d="M47.5 737L56.2 727L78.8 735.8L67.5 748.2z" fill="#e8e8e8" stroke="#cfcfcf" stroke-width=".5"/>
<path d="M173.8 709.5L181.2 703.2L186.2 708.2L178.8 715.1z" fill="#dfdfe8" />
<path d="M500.9 662.7L544.1 660.8L553.9 670.6L550 707.9L544.1 729.5L500.9 727.5z" fill="#d5fbe2" stroke="#a8e8c8" stroke-width=".5"/>
<path d="M513.7 672.6L549 670.6L549 682.4L513.7 682.4z" fill="#8fd8c8" stroke="#c8f5e0" stroke-width=".6" opacity=".8"/>
<path d="M514.7 696.1L549 694.1L549 702L514.7 703.9z" fill="#8fd8c8" stroke="#c8f5e0" stroke-width=".6" opacity=".8"/>
<path d="M504.8 712.8L544.1 711.8L544.1 724.6L504.8 725.5z" fill="#8fd8c8" stroke="#c8f5e0" stroke-width=".6" opacity=".8"/>
<path d="M548 654.9L569.6 646.1L577.5 662.7L555.9 672.6z" fill="#d5fbe2" stroke="#a8e8c8" stroke-width=".5"/>
<path d="M551 656.9L568.6 649L574.5 661.8L556.9 669.6z" fill="#8fd8c8" stroke="#c8f5e0" stroke-width=".6" opacity=".8"/>
<path d="M22.5 552.5L38.8 537.5L56.2 529.4L72.5 530L85 535L100 545.6M22.5 603.8L36.2 585L57.5 570L82.5 561.2L107.5 558.1L145 557.5L182.5 555L220 555L257.5 560M22.5 580L35 570L57.5 555L80 548.8L100 545.6L142.5 541.2L170 538.8L211.2 536.2L242.5 538.8L260 542.5M105 518.8L102.5 531.2L101.2 545L101.2 558.8M145 532.5L145 557.5L147.5 577.5L148.8 597.5M132.5 513.8L135 525L143.8 532.5L155 528.8L165 516.2L166.2 507.5M155 530L170 532.5L173.8 537.5L171.2 555M167.5 526.2L182.5 518.8L205 507.5M181.2 520L197.5 536.2M206.2 507.5L207.5 535M217.5 505L218.8 553.8M222.5 528.8L242.5 515L260 510M243.8 538.8L245 545M257.5 522.5L248.8 538.8M113.8 558.8L115 580L123.8 586.2L120 592.5M117.5 568.8L130 568.1L128.8 577.5L120 577.5M121.7 596.9a6.8 6.8 0 1 0 13.6 0a6.8 6.8 0 1 0 -13.6 0M147.5 577.5L162.5 587.5L155 595M107.5 635L120 625L145 603.8L170 580L177.5 565L178.8 556.2M185 558.8L195 560L200 595L205 625L207.5 635M257.5 570L235 585L230 606.2L232.5 625L225 635M260 592.5L248.8 600L252.5 610L260 612.5M182.5 605L157.5 607.5L152.5 620L161.2 635M157.5 616.2L180 618.8L188.8 635M95 635L115 620L132.5 605M260 508.8L285 505L307.5 502.5M302.5 491.2L310 500L311.2 515L306.2 527.5L291.2 547.5L285 551.2M315 492.5L311.2 498.8M313.8 493.8L317.5 510L313.8 527.5L303.8 556.2M315 495L330 496.2L355 495L370 491.2L385 492.5L405 490L410 495L397.5 502.5L372.5 505L360 508.8L347.5 508.8L330 498.8M318.8 504.4L335 504.4L347.5 508.8M372.5 481.2L377.5 491.2M327.5 496.2L340 506.2L352.5 515L365 522.5M365 522.5L385 515L400 520L417.5 527.5L432.5 540M365 522.5L355 535L345 547.5L325 558.8L320 565L340 575M410 495L411.2 510L413.8 525M408.8 493.8L425 492.5L433.8 502.5L452.5 497.5L470 500L482.5 492.5L500 476.2M427.5 476.2L435 502.5L432.5 507.5L425 511.2L418.8 527.5M260 511.2L276.2 522.5L293.8 533.8M260 542.5L276.2 548.8L297.5 558.8L320 566.2M298.8 558.8L301.2 545L303.8 527.5M432.5 540L440 548.8L447.5 556.2L435 575M447.5 556.2L472.5 558.8L500 555M472.5 555L475 575M426.2 552.5L416.2 562.5L402.5 575M260 560L267.5 565L272.5 575M497.5 545L497.5 555M555.8 452.5L554.5 465L544.5 480L529.5 502.5L523.2 505L523.2 497.5L532 485L538.2 472.5L535.8 462.5L530.8 463.8L528.2 471.2L519.5 475L507 472.5M513.2 460L509.5 468.8M565.8 452.5L563.2 468.8L554.5 485L539.5 502.5M542 501.2L574.5 490L579.5 477.5L587 471.2L614.5 463.1L624.5 463.8L632 471.2L642 477.5M640.8 438.8L637 457.5L633.2 485M642 477.5L652 475L670.8 462.5L688.2 452.5L697 441.2L719.5 430L727 425M642 458.8L649.5 460L650.8 452.5L668.2 447.5L697 441.2M692 455L702 457.5L719.5 458.8M722 431.2L720.8 458.8L723.2 467.5L719.5 477.5L714.5 485L723.2 490M672 465L674.5 482.5L687 480M652 480L663.2 486.2L673.2 490L663.2 497.5M675.8 492.5L702 488.1M724.5 492.5L713.2 503.8L687 512.5M673.2 490L679.5 502.5L687 515L699.5 527.5L705.8 536.2L702 550M633.2 485L644.5 485L634.5 495L619.5 507.5L612 517.5L602 525L594.5 550M537 511.2L544.5 523.8L554.5 535L562 550M507 538.8L532 533.8L557 535L577 530L602 520L632 520L657 527.5L674.5 535L704.5 536.2L729.5 532.5L747 528.8M525.8 515L533.2 521.2L532 528.8L514.5 532.5M604.5 521.2L620.8 523.8M657 536.2L639.5 540L627 550M732 532.5L724.5 545L719.5 550M707 540L719.5 547.5M507 547.5L525.8 547.5M70.3 673.8L158.6 595.5M75.6 679.8L163.9 601.5M84.2 689.5L172.5 611.2M92.9 699.3L181.1 620.9M101.5 709L189.8 630.6M110.1 718.7L198.4 640.4M115.4 724.7L203.7 646.3M72.1 666.9L122.6 723.7M91.6 649.6L142 706.4M111 632.3L161.5 689.2M130.5 615.1L180.9 671.9M149.9 597.8L200.4 654.6M81.8 658.2L98.4 676.9M132.3 715.1L115.7 696.4M101.3 641L117.9 659.7M151.8 697.8L135.2 679.1M120.7 623.7L137.3 642.4M171.2 680.5L154.6 661.8M140.2 606.4L156.8 625.1M190.7 663.3L174.1 644.6M128.8 660.8a7.5 7.5 0 1 0 15 0a7.5 7.5 0 1 0 -15 0M150.8 644.8a4.2 4.2 0 1 0 8.4 0a4.2 4.2 0 1 0 -8.4 0M112.1 679a4.2 4.2 0 1 0 8.4 0a4.2 4.2 0 1 0 -8.4 0M207.5 622L215 647L212.5 663.2L205 659.5M225 622L232.5 638.2L248.8 644.5L260 638.2M242.5 622L243.8 653.2L247.5 663.2L248.8 682L260 692M203.8 659.5L226.2 658.2L243.8 653.2M260 657L247.5 663.2M250 682L260 677M152.5 719.5L145 728.2L157.5 747L165 757M128.8 722L140 734.5L150 757M111.2 720.8L112.5 734.5L107.5 747L112.5 757M20 742L57.5 747L102.5 747M45 622L61.2 638.2L77.5 658.2M30 644.5L45 657L57.5 669.5M37.5 717L32.5 734.5L23.8 740.8M257.5 734.5L232.5 747L220 757M32.5 664.5L45 674.5L40 687L27.5 692M22.5 674.5L35 680.8L45 692M70 697L82.5 709.5L100 722L107.5 734.5M268.2 560L323 580.1L374.1 598.3L432.5 611.1L510 625.7M295.6 560L377.7 585.5L432.5 596.5L510 614.7M250 574.6L266.4 565.5L273.7 576.4L260.9 596.5L250 607.4M260.9 614.7L286.5 609.3L330.3 611.1L339.4 618.4L333.9 627.5L308.4 633L273.7 645.8L260.9 633L262.8 614.7M286.5 609.3L308.4 633L299.3 664M308.4 633L323 645.8L324.8 651.2M324.8 651.2L352.2 640.3L377.7 633L381.4 614.7L377.7 600.1M339.4 616.6L363.1 612.9L375.9 596.5M250 658.5L273.7 645.8M250 680.4L275.5 669.5L312 664L330.3 671.3L341.2 693.2M253.6 682.3L268.2 700.5L279.2 715.1M381.4 640.3L401.5 629.3L432.5 623.9L481.8 623.9L510 624.8M399.6 634.8L414.2 645.8L441.6 643.9L438 623.9M381.4 647.6L414.2 662.2L419.7 675M443.4 640.3L469 645.8L485.4 647.6L487.2 623.9M481.8 602L483.6 623.9L492.7 665.8M474.5 570.9L476.3 603.8M479.9 570.9L483.6 603.8M439.8 576.4L474.5 576.4L510 576.4M405.1 592.8L432.5 578.2L443.4 563.6M485.4 647.6L510 658.5M377.7 602L414.2 614.7L434.3 623.9M341.2 706L359.5 720.6L363.1 727.9M361.3 722.4L414.2 709.6L450.7 687.7L458 685.9L465.3 718.8L463.5 724.2M344.9 704.2L388.7 689.6L425.2 685.9L458 685.9M313.9 740.7L363.1 729.7L414.2 729.7L463.5 724.2M250 744.3L295.6 746.1L359.5 744.3L436.1 731.5M279.2 715.1L284.7 733.4L275.5 757.1M328.5 709.6L310.2 733.4L302.9 742.5M476.3 684.1L478.1 706L487.2 724.2L505.5 735.2M510 685.9L487.2 698.7L479.9 718.8M465.3 718.8L478.1 742.5L492.7 757.1M497 570.5L508.8 556.8L522.5 548.9L536.2 550.9L561.8 560.7L589.2 570.5L606.9 560.7L634.4 552.8L681.5 545M561.8 550.9L555.9 572.5L561.8 596L569.6 619.6L581.4 623.5M591.2 545L593.2 568.5L583.3 590.1L581.4 623.5M583.3 590.1L614.7 590.1L640.2 584.2L669.7 564.6L693.2 556.8M616.7 592.1L614.7 603.9L599 619.6L597.1 631.3M614.7 603.9L640.2 586.2M514.7 566.6L518.6 578.4L518.6 594.1L524.5 611.7M497 590.1L512.7 596L524.5 611.7L563.7 623.5L599 631.3L632.4 637.2L673.6 637.2L697.2 635.3L720.7 623.5M497 609.8L526.4 613.7M638.3 627.4L652 629.4L655.9 619.6L650.1 611.7L657.9 607.8L681.5 594.1L691.3 578.4L693.2 564.6M673.6 637.2L677.5 623.5L693.2 617.6L712.9 609.8L726.6 601.9M697.2 554.8L693.2 564.6M522.5 627.4L538.2 635.3L579.4 639.2L626.5 647L673.6 654.9L693.2 660.8M538.2 635.3L516.6 654.9L508.8 662.7M626.5 647L626.5 662.7L642.2 676.5L659.9 666.7L693.2 660.8M626.5 658.8L606.9 670.6L591.2 682.4L565.7 698.1L563.7 721.6L561.8 727.5M642.2 676.5L622.6 694.1L595.1 717.7L583.3 725.5L561.8 727.5M595.1 717.7L622.6 725.5L646.1 737.3M693.2 660.8L689.3 682.4L681.5 702L673.6 729.5L669.7 739.3M646.1 737.3L669.7 733.4L693.2 733.4L707 737.3M693.2 680.4L701.1 702L705 721.6L708.9 737.3M705 678.4L720.7 670.6L747 654.9M705 678.4L726.6 690.2L747 694.1M705 680.4L747 682.4M710.9 686.3L722.7 705.9L747 709.8M720.7 721.6L747 725.5M497 729.5L544.1 729.5L550 707.9L553.9 694.1L551.9 662.7L544.1 660.8L516.6 658.8M544.1 729.5L542.1 753M497 739.3L516.6 743.2" fill="none" stroke="#fff" stroke-opacity=".4" stroke-width="2.400" stroke-linejoin="round"/>
<path d="M22.5 552.5L38.8 537.5L56.2 529.4L72.5 530L85 535L100 545.6M22.5 603.8L36.2 585L57.5 570L82.5 561.2L107.5 558.1L145 557.5L182.5 555L220 555L257.5 560M22.5 580L35 570L57.5 555L80 548.8L100 545.6L142.5 541.2L170 538.8L211.2 536.2L242.5 538.8L260 542.5M105 518.8L102.5 531.2L101.2 545L101.2 558.8M145 532.5L145 557.5L147.5 577.5L148.8 597.5M132.5 513.8L135 525L143.8 532.5L155 528.8L165 516.2L166.2 507.5M155 530L170 532.5L173.8 537.5L171.2 555M167.5 526.2L182.5 518.8L205 507.5M181.2 520L197.5 536.2M206.2 507.5L207.5 535M217.5 505L218.8 553.8M222.5 528.8L242.5 515L260 510M243.8 538.8L245 545M257.5 522.5L248.8 538.8M113.8 558.8L115 580L123.8 586.2L120 592.5M117.5 568.8L130 568.1L128.8 577.5L120 577.5M121.7 596.9a6.8 6.8 0 1 0 13.6 0a6.8 6.8 0 1 0 -13.6 0M147.5 577.5L162.5 587.5L155 595M107.5 635L120 625L145 603.8L170 580L177.5 565L178.8 556.2M185 558.8L195 560L200 595L205 625L207.5 635M257.5 570L235 585L230 606.2L232.5 625L225 635M260 592.5L248.8 600L252.5 610L260 612.5M182.5 605L157.5 607.5L152.5 620L161.2 635M157.5 616.2L180 618.8L188.8 635M95 635L115 620L132.5 605M260 508.8L285 505L307.5 502.5M302.5 491.2L310 500L311.2 515L306.2 527.5L291.2 547.5L285 551.2M315 492.5L311.2 498.8M313.8 493.8L317.5 510L313.8 527.5L303.8 556.2M315 495L330 496.2L355 495L370 491.2L385 492.5L405 490L410 495L397.5 502.5L372.5 505L360 508.8L347.5 508.8L330 498.8M318.8 504.4L335 504.4L347.5 508.8M372.5 481.2L377.5 491.2M327.5 496.2L340 506.2L352.5 515L365 522.5M365 522.5L385 515L400 520L417.5 527.5L432.5 540M365 522.5L355 535L345 547.5L325 558.8L320 565L340 575M410 495L411.2 510L413.8 525M408.8 493.8L425 492.5L433.8 502.5L452.5 497.5L470 500L482.5 492.5L500 476.2M427.5 476.2L435 502.5L432.5 507.5L425 511.2L418.8 527.5M260 511.2L276.2 522.5L293.8 533.8M260 542.5L276.2 548.8L297.5 558.8L320 566.2M298.8 558.8L301.2 545L303.8 527.5M432.5 540L440 548.8L447.5 556.2L435 575M447.5 556.2L472.5 558.8L500 555M472.5 555L475 575M426.2 552.5L416.2 562.5L402.5 575M260 560L267.5 565L272.5 575M497.5 545L497.5 555M555.8 452.5L554.5 465L544.5 480L529.5 502.5L523.2 505L523.2 497.5L532 485L538.2 472.5L535.8 462.5L530.8 463.8L528.2 471.2L519.5 475L507 472.5M513.2 460L509.5 468.8M565.8 452.5L563.2 468.8L554.5 485L539.5 502.5M542 501.2L574.5 490L579.5 477.5L587 471.2L614.5 463.1L624.5 463.8L632 471.2L642 477.5M640.8 438.8L637 457.5L633.2 485M642 477.5L652 475L670.8 462.5L688.2 452.5L697 441.2L719.5 430L727 425M642 458.8L649.5 460L650.8 452.5L668.2 447.5L697 441.2M692 455L702 457.5L719.5 458.8M722 431.2L720.8 458.8L723.2 467.5L719.5 477.5L714.5 485L723.2 490M672 465L674.5 482.5L687 480M652 480L663.2 486.2L673.2 490L663.2 497.5M675.8 492.5L702 488.1M724.5 492.5L713.2 503.8L687 512.5M673.2 490L679.5 502.5L687 515L699.5 527.5L705.8 536.2L702 550M633.2 485L644.5 485L634.5 495L619.5 507.5L612 517.5L602 525L594.5 550M537 511.2L544.5 523.8L554.5 535L562 550M507 538.8L532 533.8L557 535L577 530L602 520L632 520L657 527.5L674.5 535L704.5 536.2L729.5 532.5L747 528.8M525.8 515L533.2 521.2L532 528.8L514.5 532.5M604.5 521.2L620.8 523.8M657 536.2L639.5 540L627 550M732 532.5L724.5 545L719.5 550M707 540L719.5 547.5M507 547.5L525.8 547.5M70.3 673.8L158.6 595.5M75.6 679.8L163.9 601.5M84.2 689.5L172.5 611.2M92.9 699.3L181.1 620.9M101.5 709L189.8 630.6M110.1 718.7L198.4 640.4M115.4 724.7L203.7 646.3M72.1 666.9L122.6 723.7M91.6 649.6L142 706.4M111 632.3L161.5 689.2M130.5 615.1L180.9 671.9M149.9 597.8L200.4 654.6M81.8 658.2L98.4 676.9M132.3 715.1L115.7 696.4M101.3 641L117.9 659.7M151.8 697.8L135.2 679.1M120.7 623.7L137.3 642.4M171.2 680.5L154.6 661.8M140.2 606.4L156.8 625.1M190.7 663.3L174.1 644.6M128.8 660.8a7.5 7.5 0 1 0 15 0a7.5 7.5 0 1 0 -15 0M150.8 644.8a4.2 4.2 0 1 0 8.4 0a4.2 4.2 0 1 0 -8.4 0M112.1 679a4.2 4.2 0 1 0 8.4 0a4.2 4.2 0 1 0 -8.4 0M207.5 622L215 647L212.5 663.2L205 659.5M225 622L232.5 638.2L248.8 644.5L260 638.2M242.5 622L243.8 653.2L247.5 663.2L248.8 682L260 692M203.8 659.5L226.2 658.2L243.8 653.2M260 657L247.5 663.2M250 682L260 677M152.5 719.5L145 728.2L157.5 747L165 757M128.8 722L140 734.5L150 757M111.2 720.8L112.5 734.5L107.5 747L112.5 757M20 742L57.5 747L102.5 747M45 622L61.2 638.2L77.5 658.2M30 644.5L45 657L57.5 669.5M37.5 717L32.5 734.5L23.8 740.8M257.5 734.5L232.5 747L220 757M32.5 664.5L45 674.5L40 687L27.5 692M22.5 674.5L35 680.8L45 692M70 697L82.5 709.5L100 722L107.5 734.5M268.2 560L323 580.1L374.1 598.3L432.5 611.1L510 625.7M295.6 560L377.7 585.5L432.5 596.5L510 614.7M250 574.6L266.4 565.5L273.7 576.4L260.9 596.5L250 607.4M260.9 614.7L286.5 609.3L330.3 611.1L339.4 618.4L333.9 627.5L308.4 633L273.7 645.8L260.9 633L262.8 614.7M286.5 609.3L308.4 633L299.3 664M308.4 633L323 645.8L324.8 651.2M324.8 651.2L352.2 640.3L377.7 633L381.4 614.7L377.7 600.1M339.4 616.6L363.1 612.9L375.9 596.5M250 658.5L273.7 645.8M250 680.4L275.5 669.5L312 664L330.3 671.3L341.2 693.2M253.6 682.3L268.2 700.5L279.2 715.1M381.4 640.3L401.5 629.3L432.5 623.9L481.8 623.9L510 624.8M399.6 634.8L414.2 645.8L441.6 643.9L438 623.9M381.4 647.6L414.2 662.2L419.7 675M443.4 640.3L469 645.8L485.4 647.6L487.2 623.9M481.8 602L483.6 623.9L492.7 665.8M474.5 570.9L476.3 603.8M479.9 570.9L483.6 603.8M439.8 576.4L474.5 576.4L510 576.4M405.1 592.8L432.5 578.2L443.4 563.6M485.4 647.6L510 658.5M377.7 602L414.2 614.7L434.3 623.9M341.2 706L359.5 720.6L363.1 727.9M361.3 722.4L414.2 709.6L450.7 687.7L458 685.9L465.3 718.8L463.5 724.2M344.9 704.2L388.7 689.6L425.2 685.9L458 685.9M313.9 740.7L363.1 729.7L414.2 729.7L463.5 724.2M250 744.3L295.6 746.1L359.5 744.3L436.1 731.5M279.2 715.1L284.7 733.4L275.5 757.1M328.5 709.6L310.2 733.4L302.9 742.5M476.3 684.1L478.1 706L487.2 724.2L505.5 735.2M510 685.9L487.2 698.7L479.9 718.8M465.3 718.8L478.1 742.5L492.7 757.1M497 570.5L508.8 556.8L522.5 548.9L536.2 550.9L561.8 560.7L589.2 570.5L606.9 560.7L634.4 552.8L681.5 545M561.8 550.9L555.9 572.5L561.8 596L569.6 619.6L581.4 623.5M591.2 545L593.2 568.5L583.3 590.1L581.4 623.5M583.3 590.1L614.7 590.1L640.2 584.2L669.7 564.6L693.2 556.8M616.7 592.1L614.7 603.9L599 619.6L597.1 631.3M614.7 603.9L640.2 586.2M514.7 566.6L518.6 578.4L518.6 594.1L524.5 611.7M497 590.1L512.7 596L524.5 611.7L563.7 623.5L599 631.3L632.4 637.2L673.6 637.2L697.2 635.3L720.7 623.5M497 609.8L526.4 613.7M638.3 627.4L652 629.4L655.9 619.6L650.1 611.7L657.9 607.8L681.5 594.1L691.3 578.4L693.2 564.6M673.6 637.2L677.5 623.5L693.2 617.6L712.9 609.8L726.6 601.9M697.2 554.8L693.2 564.6M522.5 627.4L538.2 635.3L579.4 639.2L626.5 647L673.6 654.9L693.2 660.8M538.2 635.3L516.6 654.9L508.8 662.7M626.5 647L626.5 662.7L642.2 676.5L659.9 666.7L693.2 660.8M626.5 658.8L606.9 670.6L591.2 682.4L565.7 698.1L563.7 721.6L561.8 727.5M642.2 676.5L622.6 694.1L595.1 717.7L583.3 725.5L561.8 727.5M595.1 717.7L622.6 725.5L646.1 737.3M693.2 660.8L689.3 682.4L681.5 702L673.6 729.5L669.7 739.3M646.1 737.3L669.7 733.4L693.2 733.4L707 737.3M693.2 680.4L701.1 702L705 721.6L708.9 737.3M705 678.4L720.7 670.6L747 654.9M705 678.4L726.6 690.2L747 694.1M705 680.4L747 682.4M710.9 686.3L722.7 705.9L747 709.8M720.7 721.6L747 725.5M497 729.5L544.1 729.5L550 707.9L553.9 694.1L551.9 662.7L544.1 660.8L516.6 658.8M544.1 729.5L542.1 753M497 739.3L516.6 743.2" fill="none" stroke="#fa8072" stroke-width="1.250" stroke-dasharray="3.200 2.100" stroke-linejoin="round"/>
<path d="M16 597Q50 572 80 560T136 550L213 546" fill="none" stroke="#c4c4c4" stroke-width="4.1000000000000005" stroke-linejoin="round" stroke-linecap="butt"/>
<path d="M151 597Q180 598 196 615T205 640" fill="none" stroke="#cfcfcf" stroke-width="5.7" stroke-linejoin="round" stroke-linecap="butt"/>
<path d="M151 597L70 670 40 716Q30 735 26 756" fill="none" stroke="#cfcfcf" stroke-width="4.4" stroke-linejoin="round" stroke-linecap="butt"/>
<path d="M39 716L107 743 112 756" fill="none" stroke="#cfcfcf" stroke-width="6.2" stroke-linejoin="round" stroke-linecap="butt"/>
<path d="M14 742Q40 746 62 758" fill="none" stroke="#cfcfcf" stroke-width="10.2" stroke-linejoin="round" stroke-linecap="butt"/>
<path d="M107 743Q150 712 200 660" fill="none" stroke="#cfcfcf" stroke-width="3.8" stroke-linejoin="round" stroke-linecap="butt"/>
<path d="M107.500 519L109 580" fill="none" stroke="#cfcfcf" stroke-width="2.8" stroke-linejoin="round" stroke-linecap="butt"/>
<path d="M211 500L212.500 545" fill="none" stroke="#cfcfcf" stroke-width="3.2" stroke-linejoin="round" stroke-linecap="butt"/>
<path d="M176 548Q176 575 160 593M182 548Q183 580 195 612" fill="none" stroke="#cfcfcf" stroke-width="2.6" stroke-linejoin="round" stroke-linecap="butt"/>
<path d="M728.500 604Q720 612 716.800 623.500M747 594L728.500 604" fill="none" stroke="#cfcfcf" stroke-width="2.8" stroke-linejoin="round" stroke-linecap="butt"/>
<path d="M470 682Q468 720 480 738T500 758" fill="none" stroke="#bdbdbd" stroke-width="4.8" stroke-linejoin="round" stroke-linecap="butt"/>
<path d="M729 600Q722 610 716 626" fill="none" stroke="#cfcfcf" stroke-width="3.5999999999999996" stroke-linejoin="round" stroke-linecap="butt"/>
<path d="M212 546L256 554 374 594 528 618 632 640 700 651" fill="none" stroke="#b9b9c9" stroke-width="7.4" stroke-linejoin="round" stroke-linecap="butt"/>
<path d="M662 643.500L699 643 694 652z" fill="none" stroke="#b9b9c9" stroke-width="5.2" stroke-linejoin="round" stroke-linecap="butt"/>
<path d="M396 592Q412 572 428 551T440 535" fill="none" stroke="#b9b9c9" stroke-width="5.6000000000000005" stroke-linejoin="round" stroke-linecap="butt"/>
<path d="M535 507.500L570 497 610 486.500Q632 485 652 501T682 543Q691 556 677 568L638 604Q631 611 631 640" fill="none" stroke="#b9b9c9" stroke-width="6.4" stroke-linejoin="round" stroke-linecap="butt"/>
<path d="M54 672L104 730 116 752" fill="none" stroke="#b9b9c9" stroke-width="5.6000000000000005" stroke-linejoin="round" stroke-linecap="butt"/>
<path d="M558.500 452Q556 470 546 484T528 506L500 513 470 517Q450 524 441 536" fill="none" stroke="#c8c8c8" stroke-width="11.2" stroke-linejoin="round" stroke-linecap="butt"/>
<path d="M224 758Q240 744 262 731L336 700 416 679 470 678.500Q494 674 508 656T524 624" fill="none" stroke="#c8c8c8" stroke-width="11.2" stroke-linejoin="round" stroke-linecap="butt"/>
<path d="M752 622Q722 634 706 653T700.500 678Q705 704 714 730T722 760" fill="none" stroke="#d8a45c" stroke-width="14.1" stroke-linejoin="round" stroke-linecap="butt"/>
<path d="M16 597Q50 572 80 560T136 550L213 546" fill="none" stroke="#fff" stroke-width="3.2" stroke-linejoin="round" stroke-linecap="butt"/>
<path d="M151 597Q180 598 196 615T205 640" fill="none" stroke="#fff" stroke-width="4.5" stroke-linejoin="round" stroke-linecap="butt"/>
<path d="M151 597L70 670 40 716Q30 735 26 756" fill="none" stroke="#fff" stroke-width="3.2" stroke-linejoin="round" stroke-linecap="butt"/>
<path d="M39 716L107 743 112 756" fill="none" stroke="#fff" stroke-width="5" stroke-linejoin="round" stroke-linecap="butt"/>
<path d="M14 742Q40 746 62 758" fill="none" stroke="#fff" stroke-width="9" stroke-linejoin="round" stroke-linecap="butt"/>
<path d="M107 743Q150 712 200 660" fill="none" stroke="#fff" stroke-width="2.6" stroke-linejoin="round" stroke-linecap="butt"/>
<path d="M107.500 519L109 580" fill="none" stroke="#fff" stroke-width="2" stroke-linejoin="round" stroke-linecap="butt"/>
<path d="M211 500L212.500 545" fill="none" stroke="#fff" stroke-width="2.4" stroke-linejoin="round" stroke-linecap="butt"/>
<path d="M176 548Q176 575 160 593M182 548Q183 580 195 612" fill="none" stroke="#fff" stroke-width="1.8" stroke-linejoin="round" stroke-linecap="butt"/>
<path d="M728.500 604Q720 612 716.800 623.500M747 594L728.500 604" fill="none" stroke="#fff" stroke-width="2" stroke-linejoin="round" stroke-linecap="butt"/>
<path d="M470 682Q468 720 480 738T500 758" fill="none" stroke="#fff" stroke-width="3.6" stroke-linejoin="round" stroke-linecap="butt"/>
<path d="M729 600Q722 610 716 626" fill="none" stroke="#fff" stroke-width="2.4" stroke-linejoin="round" stroke-linecap="butt"/>
<path d="M212 546L256 554 374 594 528 618 632 640 700 651" fill="none" stroke="#dddde8" stroke-width="6.2" stroke-linejoin="round" stroke-linecap="butt"/>
<path d="M662 643.500L699 643 694 652z" fill="none" stroke="#dddde8" stroke-width="4" stroke-linejoin="round" stroke-linecap="butt"/>
<path d="M396 592Q412 572 428 551T440 535" fill="none" stroke="#dddde8" stroke-width="4.4" stroke-linejoin="round" stroke-linecap="butt"/>
<path d="M535 507.500L570 497 610 486.500Q632 485 652 501T682 543Q691 556 677 568L638 604Q631 611 631 640" fill="none" stroke="#dddde8" stroke-width="5.2" stroke-linejoin="round" stroke-linecap="butt"/>
<path d="M54 672L104 730 116 752" fill="none" stroke="#dddde8" stroke-width="4.4" stroke-linejoin="round" stroke-linecap="butt"/>
<path d="M558.500 452Q556 470 546 484T528 506L500 513 470 517Q450 524 441 536" fill="none" stroke="#fff" stroke-width="10" stroke-linejoin="round" stroke-linecap="butt"/>
<path d="M224 758Q240 744 262 731L336 700 416 679 470 678.500Q494 674 508 656T524 624" fill="none" stroke="#fff" stroke-width="10" stroke-linejoin="round" stroke-linecap="butt"/>
<path d="M752 622Q722 634 706 653T700.500 678Q705 704 714 730T722 760" fill="none" stroke="#fcd6a4" stroke-width="12.5" stroke-linejoin="round" stroke-linecap="butt"/>
<path d="M752 624Q726 636 712 656T708 690Q716 720 730 756" fill="none" stroke="#2233cc" stroke-width="1" stroke-dasharray="3 2"/>
<text transform="translate(94.5 229.5) rotate(86.9)" text-anchor="middle" font-size="10.5" fill="#111" stroke="#fff" stroke-width="1.700" stroke-opacity=".62" paint-order="stroke" stroke-linejoin="round"  textLength="53.1" lengthAdjust="spacingAndGlyphs" dy=".35em">10th Avenue</text>
<text transform="translate(146 252) rotate(86.9)" text-anchor="middle" font-size="10.5" fill="#111" stroke="#fff" stroke-width="1.700" stroke-opacity=".62" paint-order="stroke" stroke-linejoin="round"  textLength="48.1" lengthAdjust="spacingAndGlyphs" dy=".35em">9th Avenue</text>
<text transform="translate(49 313.8) rotate(86.9)" text-anchor="middle" font-size="10.5" fill="#111" stroke="#fff" stroke-width="1.700" stroke-opacity=".62" paint-order="stroke" stroke-linejoin="round"  textLength="52.6" lengthAdjust="spacingAndGlyphs" dy=".35em">11th Avenue</text>
<text transform="translate(247 271.2) rotate(86.9)" text-anchor="middle" font-size="10.5" fill="#111" stroke="#fff" stroke-width="1.700" stroke-opacity=".62" paint-order="stroke" stroke-linejoin="round"  textLength="47.6" lengthAdjust="spacingAndGlyphs" dy=".35em">7th Avenue</text>
<text transform="translate(346 243.3) rotate(86.9)" text-anchor="middle" font-size="10.5" fill="#111" stroke="#fff" stroke-width="1.700" stroke-opacity=".62" paint-order="stroke" stroke-linejoin="round"  textLength="46.8" lengthAdjust="spacingAndGlyphs" dy=".35em">5th Avenue</text>
<text transform="translate(300 328.8) rotate(86.9)" text-anchor="middle" font-size="10.5" fill="#111" stroke="#fff" stroke-width="1.700" stroke-opacity=".62" paint-order="stroke" stroke-linejoin="round"  textLength="47.6" lengthAdjust="spacingAndGlyphs" dy=".35em">6th Avenue</text>
<text transform="translate(446 262) rotate(86.9)" text-anchor="middle" font-size="10.5" fill="#111" stroke="#fff" stroke-width="1.700" stroke-opacity=".62" paint-order="stroke" stroke-linejoin="round"  textLength="48.1" lengthAdjust="spacingAndGlyphs" dy=".35em">3rd Avenue</text>
<text transform="translate(496 247.5) rotate(86.9)" text-anchor="middle" font-size="10.5" fill="#111" stroke="#fff" stroke-width="1.700" stroke-opacity=".62" paint-order="stroke" stroke-linejoin="round"  textLength="50.1" lengthAdjust="spacingAndGlyphs" dy=".35em">2nd Avenue</text>
<text transform="translate(106 435) rotate(86.9)" text-anchor="middle" font-size="10.5" fill="#111" stroke="#fff" stroke-width="1.700" stroke-opacity=".62" paint-order="stroke" stroke-linejoin="round"  textLength="52.1" lengthAdjust="spacingAndGlyphs" dy=".35em">10th Avenue</text>
<text transform="translate(206.7 444) rotate(86.9)" text-anchor="middle" font-size="10.5" fill="#111" stroke="#fff" stroke-width="1.700" stroke-opacity=".62" paint-order="stroke" stroke-linejoin="round"  textLength="48.1" lengthAdjust="spacingAndGlyphs" dy=".35em">8th Avenue</text>
<text transform="translate(306 434.5) rotate(86.9)" text-anchor="middle" font-size="10.5" fill="#111" stroke="#fff" stroke-width="1.700" stroke-opacity=".62" paint-order="stroke" stroke-linejoin="round"  textLength="47.1" lengthAdjust="spacingAndGlyphs" dy=".35em">6th Avenue</text>
<text transform="translate(139.7 283.3) rotate(-3.2)" text-anchor="middle" font-size="10.5" fill="#111" stroke="#fff" stroke-width="1.700" stroke-opacity=".62" paint-order="stroke" stroke-linejoin="round"  textLength="56" lengthAdjust="spacingAndGlyphs" dy=".35em">Balboa Street</text>
<text transform="translate(355.3 271) rotate(-3.4)" text-anchor="middle" font-size="10.5" fill="#111" stroke="#fff" stroke-width="1.700" stroke-opacity=".62" paint-order="stroke" stroke-linejoin="round"  textLength="55" lengthAdjust="spacingAndGlyphs" dy=".35em">Balboa Street</text>
<text transform="translate(75.4 397.5) rotate(-3)" text-anchor="middle" font-size="10.5" fill="#111" stroke="#fff" stroke-width="1.700" stroke-opacity=".62" paint-order="stroke" stroke-linejoin="round"  textLength="59" lengthAdjust="spacingAndGlyphs" dy=".35em">Cabrillo Street</text>
<text transform="translate(454.6 375) rotate(-3.2)" text-anchor="middle" font-size="10.5" fill="#111" stroke="#fff" stroke-width="1.700" stroke-opacity=".62" paint-order="stroke" stroke-linejoin="round"  textLength="59" lengthAdjust="spacingAndGlyphs" dy=".35em">Cabrillo Street</text>
<text transform="translate(13 510.5) rotate(-3.8)" text-anchor="middle" font-size="10.5" fill="#111" stroke="#fff" stroke-width="1.700" stroke-opacity=".62" paint-order="stroke" stroke-linejoin="round"  textLength="56" lengthAdjust="spacingAndGlyphs" dy=".35em">Fulton Street</text>
<text transform="translate(163.7 502.5) rotate(-4)" text-anchor="middle" font-size="10.5" fill="#111" stroke="#fff" stroke-width="1.700" stroke-opacity=".62" paint-order="stroke" stroke-linejoin="round"  textLength="59" lengthAdjust="spacingAndGlyphs" dy=".35em">Fulton Street</text>
<text transform="translate(278 490.5) rotate(-8)" text-anchor="middle" font-size="10.5" fill="#111" stroke="#fff" stroke-width="1.700" stroke-opacity=".62" paint-order="stroke" stroke-linejoin="round"  textLength="59" lengthAdjust="spacingAndGlyphs" dy=".35em">Fulton Street</text>
<text transform="translate(456.7 462.5) rotate(-9.5)" text-anchor="middle" font-size="10.5" fill="#111" stroke="#fff" stroke-width="1.700" stroke-opacity=".62" paint-order="stroke" stroke-linejoin="round"  textLength="59" lengthAdjust="spacingAndGlyphs" dy=".35em">Fulton Street</text>
<text transform="translate(645 262.5) rotate(-8)" text-anchor="middle" font-size="10.5" fill="#111" stroke="#fff" stroke-width="1.700" stroke-opacity=".62" paint-order="stroke" stroke-linejoin="round"  textLength="63" lengthAdjust="spacingAndGlyphs" dy=".35em">Turk Boulevard</text>
<text transform="translate(585.4 222.5) rotate(-8.5)" text-anchor="middle" font-size="10.5" fill="#111" stroke="#fff" stroke-width="1.700" stroke-opacity=".62" paint-order="stroke" stroke-linejoin="round"  textLength="60" lengthAdjust="spacingAndGlyphs" dy=".35em">Edward Street</text>
<text transform="translate(641 378) rotate(-9)" text-anchor="middle" font-size="10.5" fill="#111" stroke="#fff" stroke-width="1.700" stroke-opacity=".62" paint-order="stroke" stroke-linejoin="round"  textLength="69" lengthAdjust="spacingAndGlyphs" dy=".35em">McAllister Street</text>
<text transform="translate(770 368) rotate(-9)" text-anchor="middle" font-size="10.5" fill="#111" stroke="#fff" stroke-width="1.700" stroke-opacity=".62" paint-order="stroke" stroke-linejoin="round"  textLength="69" lengthAdjust="spacingAndGlyphs" dy=".35em">McAllister Street</text>
<text transform="translate(639.9 324.5) rotate(80.6)" text-anchor="middle" font-size="10.5" fill="#111" stroke="#fff" stroke-width="1.700" stroke-opacity=".62" paint-order="stroke" stroke-linejoin="round"  textLength="84.1" lengthAdjust="spacingAndGlyphs" dy=".35em">Willard Street North</text>
<text transform="translate(714 307.5) rotate(79.8)" text-anchor="middle" font-size="10.5" fill="#111" stroke="#fff" stroke-width="1.700" stroke-opacity=".62" paint-order="stroke" stroke-linejoin="round"  textLength="68.1" lengthAdjust="spacingAndGlyphs" dy=".35em">Stanyan Street</text>
<text transform="translate(742 487.9) rotate(79.1)" text-anchor="middle" font-size="10.5" fill="#111" stroke="#fff" stroke-width="1.700" stroke-opacity=".62" paint-order="stroke" stroke-linejoin="round"  textLength="68.9" lengthAdjust="spacingAndGlyphs" dy=".35em">Stanyan Street</text>
<text transform="translate(593 487.5) rotate(-26.6)" text-anchor="middle" font-size="10.5" fill="#111" stroke="#fff" stroke-width="1.700" stroke-opacity=".62" paint-order="stroke" stroke-linejoin="round"  textLength="60.4" lengthAdjust="spacingAndGlyphs" dy=".35em">Phil Arnold Trail</text>
<text transform="translate(567.8 590) rotate(73.2)" text-anchor="middle" font-size="10.5" fill="#111" stroke="#fff" stroke-width="1.700" stroke-opacity=".62" paint-order="stroke" stroke-linejoin="round"  textLength="60.6" lengthAdjust="spacingAndGlyphs" dy=".35em">Pompei Circle</text>
<text transform="translate(669.5 590.5) rotate(-48.9)" text-anchor="middle" font-size="10.5" fill="#111" stroke="#fff" stroke-width="1.700" stroke-opacity=".62" paint-order="stroke" stroke-linejoin="round"  textLength="62.4" lengthAdjust="spacingAndGlyphs" dy=".35em">Phil Arnold Trail</text>
<text transform="translate(715.5 659) rotate(-52.2)" text-anchor="middle" font-size="10.5" fill="#111" stroke="#fff" stroke-width="1.700" stroke-opacity=".62" paint-order="stroke" stroke-linejoin="round"  textLength="50.6" lengthAdjust="spacingAndGlyphs" dy=".35em">Kezar Drive</text>
<text transform="translate(300.8 715.2) rotate(-20.1)" text-anchor="middle" font-size="10.5" fill="#111" stroke="#fff" stroke-width="1.700" stroke-opacity=".62" paint-order="stroke" stroke-linejoin="round"  textLength="77.2" lengthAdjust="spacingAndGlyphs" dy=".35em">Nancy Pelosi Drive</text>
<text transform="translate(160.4 692) rotate(-41.4)" text-anchor="middle" font-size="10.5" fill="#111" stroke="#fff" stroke-width="1.700" stroke-opacity=".62" paint-order="stroke" stroke-linejoin="round"  textLength="99.8" lengthAdjust="spacingAndGlyphs" dy=".35em">Music Concourse Drive</text>
<text transform="translate(492.5 747) rotate(34.6)" text-anchor="middle" font-size="10.5" fill="#111" stroke="#fff" stroke-width="1.700" stroke-opacity=".62" paint-order="stroke" stroke-linejoin="round"  textLength="35.2" lengthAdjust="spacingAndGlyphs" dy=".35em">Bowling</text>
<defs><path id="pjfk" d="M26.500 592.500Q52 571 82 560T139 550.500"/><path id="pcde" d="M621 487.500Q650 490 669 514T689 563"/></defs>
<text font-size="10.500" fill="#222" stroke="#fff" stroke-width="1.700" stroke-opacity=".62" paint-order="stroke" stroke-linejoin="round" dy="3.500"><textPath href="#pjfk" textLength="122" lengthAdjust="spacingAndGlyphs">John F. Kennedy Promenade</textPath></text>
<text font-size="10.500" fill="#222" stroke="#fff" stroke-width="1.700" stroke-opacity=".62" paint-order="stroke" stroke-linejoin="round" dy="3.500"><textPath href="#pcde" textLength="102" lengthAdjust="spacingAndGlyphs">Conservatory Drive East</textPath></text>
<text transform="translate(96.8 594.5) rotate(0)" text-anchor="middle" font-size="10.5" fill="#734a08" stroke="#fff" stroke-width="1.700" stroke-opacity=".62" paint-order="stroke" stroke-linejoin="round"  textLength="33" lengthAdjust="spacingAndGlyphs" dy=".35em">Hamon</text>
<text transform="translate(96.8 606.5) rotate(0)" text-anchor="middle" font-size="10.5" fill="#734a08" stroke="#fff" stroke-width="1.700" stroke-opacity=".62" paint-order="stroke" stroke-linejoin="round"  textLength="27" lengthAdjust="spacingAndGlyphs" dy=".35em">Tower</text>
<text transform="translate(129 670) rotate(0)" text-anchor="middle" font-size="10.5" fill="#0e8517" stroke="#fff" stroke-width="1.700" stroke-opacity=".62" paint-order="stroke" stroke-linejoin="round" font-style="italic" textLength="74" lengthAdjust="spacingAndGlyphs" dy=".35em">Music Concourse</text>
<text transform="translate(527 667.8) rotate(0)" text-anchor="middle" font-size="10.5" fill="#0e8517" stroke="#fff" stroke-width="1.700" stroke-opacity=".62" paint-order="stroke" stroke-linejoin="round" font-style="italic" textLength="38" lengthAdjust="spacingAndGlyphs" dy=".35em">Lisa and</text>
<text transform="translate(527 679.7) rotate(0)" text-anchor="middle" font-size="10.5" fill="#0e8517" stroke="#fff" stroke-width="1.700" stroke-opacity=".62" paint-order="stroke" stroke-linejoin="round" font-style="italic" textLength="37" lengthAdjust="spacingAndGlyphs" dy=".35em">Douglas</text>
<text transform="translate(527 691.6) rotate(0)" text-anchor="middle" font-size="10.5" fill="#0e8517" stroke="#fff" stroke-width="1.700" stroke-opacity=".62" paint-order="stroke" stroke-linejoin="round" font-style="italic" textLength="41" lengthAdjust="spacingAndGlyphs" dy=".35em">Goldman</text>
<text transform="translate(527 703.5) rotate(0)" text-anchor="middle" font-size="10.5" fill="#0e8517" stroke="#fff" stroke-width="1.700" stroke-opacity=".62" paint-order="stroke" stroke-linejoin="round" font-style="italic" textLength="28" lengthAdjust="spacingAndGlyphs" dy=".35em">Tennis</text>
<text transform="translate(527 715.4) rotate(0)" text-anchor="middle" font-size="10.5" fill="#0e8517" stroke="#fff" stroke-width="1.700" stroke-opacity=".62" paint-order="stroke" stroke-linejoin="round" font-style="italic" textLength="29" lengthAdjust="spacingAndGlyphs" dy=".35em">Center</text>
<text transform="translate(580 731.8) rotate(0)" text-anchor="middle" font-size="10.5" fill="#5d8a45"  font-style="italic" textLength="64" lengthAdjust="spacingAndGlyphs" dy=".35em">Robin Williams</text>
<text transform="translate(580 743.5) rotate(0)" text-anchor="middle" font-size="10.5" fill="#5d8a45"  font-style="italic" opacity=".5" textLength="34" lengthAdjust="spacingAndGlyphs" dy=".35em">Meadow</text>
<path d="M85 268v13M80.5 272h9" stroke="#000" stroke-width="1.800" fill="none"/>
<path d="M113 379.5v13M108.5 383.5h9" stroke="#000" stroke-width="1.800" fill="none"/>
<path d="M195 396v13M190.5 400h9" stroke="#000" stroke-width="1.800" fill="none"/>
<path d="M416 379v13M411.5 383h9" stroke="#000" stroke-width="1.800" fill="none"/>
<circle cx="303.5" cy="256.5" r="4.800" fill="none" stroke="#000" stroke-width="1.700"/><path d="M299.5 256.5h8M303.5 252.5v8M300.5 253.5l6 6M306.5 253.5l-6 6" stroke="#000" stroke-width="1"/>
<circle cx="97.5" cy="468.5" r="4.800" fill="none" stroke="#000" stroke-width="1.700"/><path d="M93.5 468.5h8M97.5 464.5v8M94.5 465.5l6 6M100.5 465.5l-6 6" stroke="#000" stroke-width="1"/>
<circle cx="97.5" cy="492" r="4.800" fill="none" stroke="#000" stroke-width="1.700"/><path d="M93.5 492h8M97.5 488v8M94.5 489l6 6M100.5 489l-6 6" stroke="#000" stroke-width="1"/>
<path d="M565.5 362.5h9l-1.500 5.500h-6zM574.5 362.5l2-2.500" fill="none" stroke="#ac39ac" stroke-width="1.300"/><circle cx="567.5" cy="371.0" r="1.100" fill="#ac39ac"/><circle cx="572.5" cy="371.0" r="1.100" fill="#ac39ac"/>
<path d="M226 432.5h9l-1.500 5.500h-6zM235 432.5l2-2.500" fill="none" stroke="#ac39ac" stroke-width="1.300"/><circle cx="228" cy="441.0" r="1.100" fill="#ac39ac"/><circle cx="233" cy="441.0" r="1.100" fill="#ac39ac"/>
<path d="M546.500 428.500a1.600 1.600 0 1 1 0 .1M543 432.500l3.500-1 2 1-1 4 2.500 2.500h-6.500l2.500-2.500.5-2.500z" fill="#000"/>
<path d="M53.0 609.5L59.5 605.5 66.0 609.5zM54.5 610.5h2v6h-2zM58.5 610.5h2v6h-2zM62.5 610.5h2v6h-2zM53.0 617.0h13v2h-13z" fill="#734a08"/>
<path d="M195.3 707.5L201.8 703.5 208.3 707.5zM196.8 708.5h2v6h-2zM200.8 708.5h2v6h-2zM204.8 708.5h2v6h-2zM195.3 715.0h13v2h-13z" fill="#734a08"/>
<path d="M173.2 620q1.800-2.500 3.600 0v8.500h-3.600zM171.5 628.5h7v1.300h-7zM170 630h10v1.500h-10z" fill="#734a08"/>
<path d="M537.2 589q1.800-2.500 3.600 0v8.500h-3.600zM535.5 597.5h7v1.300h-7zM534 599h10v1.500h-10z" fill="#734a08"/>
<path d="M79 700.500h6v6q-3 3-6 0zM83 703h7v6.500q-3.500 3.500-7 0z" fill="#734a08" stroke="#d9d0c9" stroke-width=".5"/>
<path d="M96.500 573.500v11M91.700 576.500l9.600 5.500M91.700 582l9.600-5.500" stroke="#734a08" stroke-width="1.700" stroke-linecap="round"/>
<path d="M262.500 526.500h11M261.500 530.500h13M265.500 526.500l-2.500 8M270.500 526.500l2.500 8" stroke="#0e8517" stroke-width="1.400" fill="none"/>
<path d="M413.500 511.500l5.500-4 5.500 4M415.500 510.500v6M422.500 510.500v6" stroke="#555" stroke-width="1.200" fill="none"/>
<path d="M34 705h5v8h-5z" fill="#0092da"/><path d="M39 707l6-2" stroke="#0092da" stroke-width="1"/><path d="M23.500 687.500h4v4h-4z" fill="#fff" stroke="#777" stroke-width=".6"/>
<path d="M45 553l9-4 5 9-9 4z" fill="none" stroke="#7fa88f" stroke-width=".7"/>
<path d="M110.500 546v-20" stroke="#3333bb" stroke-width=".9" stroke-dasharray="3 2"/><path d="M110.500 522.500l-2 4.500h4z" fill="#1a1a80"/>
<path d="M735 631.500l9-3.500M741.500 626l3 2-1.500 3" stroke="#1a1a80" stroke-width="1.200" fill="none"/>
<path d="M95 684l-9 5.500M88.500 686l-2.500 3.500 4 .8" stroke="#444" stroke-width="1" fill="none"/><path d="M202 648l3-9M203 642.500l2-3.500 1.500 3.500" stroke="#444" stroke-width="1" fill="none"/>
<path d="M128 503L270 493.500 510 453.500 546 449.500 553 446.500 566 446.500 731 420.500 734 440" fill="none" stroke="#f97b6b" stroke-width="2.200" stroke-linejoin="round"/>
<path d="M105 276h6v6h-6zM84 286.7h6v6h-6zM200 270.8h6v6h-6zM189 282h6v6h-6zM260 377.8h6v6h-6zM242 388.7h6v6h-6zM284 266.7h6v6h-6zM312.8 273.7h6v6h-6zM299 279.8h6v6h-6zM292 287.8h6v6h-6zM385.8 269.8h6v6h-6zM401 258.7h6v6h-6zM552 245.8h6v6h-6zM536 256.7h6v6h-6zM564.8 275.8h6v6h-6zM542.8 289.8h6v6h-6zM687 245.8h6v6h-6zM722 250.8h6v6h-6zM210 477.8h6v6h-6zM202.8 485.7h6v6h-6zM190.8 490.7h6v6h-6zM237.8 499.8h6v6h-6zM127.8 506.7h6v6h-6zM310 462.8h6v6h-6zM294 477.8h6v6h-6zM327 487h6v6h-6zM392 462.8h6v6h-6zM421 470.8h6v6h-6zM562 431.7h6v6h-6zM572.8 445.7h6v6h-6zM712 413.7h6v6h-6zM730 438.7h6v6h-6zM67 667h6v6h-6zM198.7 654h6v6h-6zM370.8 591.7h6v6h-6zM394 589h6v6h-6zM526 614.8h6v6h-6zM511.8 622h6v6h-6zM727.8 599.7h6v6h-6z" fill="#0a8bd8"/>
<text x="91" y="467.500" font-size="13" fill="#fff" fill-opacity=".82" textLength="48" lengthAdjust="spacingAndGlyphs">Tracker1</text>
<circle cx="115" cy="505" r="15" fill="#1273ef"/>
<path d="M104.500 496.500L127 505 104.500 513.500 109.500 505z" fill="#fff" fill-opacity=".92"/>
</svg></div>
<!-- leaflet controls -->
<div class="abs" style="left:31px;top:226px;width:34px;height:64px;border:2px solid rgba(0,0,0,.2);border-radius:4px;z-index:6;background:#fff;background-clip:padding-box"></div>
<div class="abs" style="left:33px;top:257px;width:30px;height:1px;background:#ccc;z-index:7"></div>
<div class="abs" style="left:713px;top:218px;width:32px;height:32px;border-radius:50%;background:#00695c;z-index:6;box-shadow:0 2px 4px rgba(0,0,0,.35),0 0 2px rgba(0,0,0,.2)"></div>
<svg class="ic" style="left:717.00px;top:222.00px;" width="24.0" height="24.0" viewBox="0 0 24 24"><path fill="#fff" d="M11 17h2v-6h-2v6zm1-15C6.480 2 2 6.480 2 12s4.480 10 10 10 10-4.480 10-10S17.520 2 12 2zm0 18c-4.410 0-8-3.590-8-8s3.590-8 8-8 8 3.590 8 8-3.590 8-8 8zM11 9h2V7h-2v2z"/></svg>
<div class="abs" style="left:545px;top:739px;width:202px;height:16px;background:rgba(255,255,255,.72);z-index:6"></div>
<svg class="ic" style="left:26.00px;top:136.00px;" width="24.0" height="24.0" viewBox="0 0 24 24"><path fill="#00a2ff" d="M12 8c-2.210 0-4 1.790-4 4s1.790 4 4 4 4-1.790 4-4-1.790-4-4-4zm8.940 3c-.460-4.170-3.770-7.480-7.940-7.940V1h-2v2.060C6.830 3.520 3.520 6.830 3.060 11H1v2h2.060c.460 4.170 3.770 7.480 7.940 7.940V23h2v-2.060c4.170-.460 7.480-3.770 7.940-7.940H23v-2h-2.060zM12 19c-3.870 0-7-3.130-7-7s3.130-7 7-7 7 3.130 7 7-3.130 7-7 7z"/></svg>
<svg class="ic" style="left:35.80px;top:164.00px;" width="24.0" height="24.0" viewBox="0 0 24 24"><path fill="rgba(255,255,255,.85)" d="M11.99 2C6.47 2 2 6.48 2 12s4.47 10 9.99 10C17.52 22 22 17.52 22 12S17.52 2 11.99 2zM12 20c-4.42 0-8-3.58-8-8s3.58-8 8-8 8 3.58 8 8-3.58 8-8 8zm.5-13H11v6l5.25 3.15.75-1.23-4.5-2.67z"/></svg>
<svg class="ic" style="left:656.80px;top:142.80px;" width="20.8" height="20.8" viewBox="0 0 24 24"><path fill="#fff" d="M3 17.25V21h3.75L17.81 9.94l-3.75-3.75L3 17.250zM20.710 7.040c.390-.390.390-1.020 0-1.410l-2.340-2.340c-.390-.390-1.020-.390-1.410 0l-1.830 1.830 3.750 3.750 1.830-1.830z"/></svg>
<svg class="ic" style="left:688.60px;top:142.60px;" width="20.8" height="20.8" viewBox="0 0 24 24"><path fill="#fff" d="M19 9h-4V3H9v6H5l7 7 7-7zM5 18v2h14v-2H5z"/></svg>
<svg class="ic" style="left:720.80px;top:142.70px;" width="20.8" height="20.8" viewBox="0 0 24 24"><path fill="#fff" d="M19 6.41L17.59 5 12 10.59 6.41 5 5 6.41 10.59 12 5 17.59 6.41 19 12 13.41 17.59 19 19 17.59 13.41 12z"/></svg>
<svg class="ic" style="left:40.60px;top:768.00px;" width="24.0" height="24.0" viewBox="0 0 24 24"><path fill="rgba(255,255,255,.4)" d="M11 18V6l-8.5 6 8.5 6zm.5-6l8.5 6V6l-8.5 6z"/></svg>
<svg class="ic" style="left:85.00px;top:768.00px;" width="24.0" height="24.0" viewBox="0 0 24 24"><path fill="rgba(255,255,255,.4)" d="M6 6h2v12H6zm3.5 6l8.5 6V6z"/></svg>
<svg class="ic" style="left:572.00px;top:768.00px;" width="24.0" height="24.0" viewBox="0 0 24 24"><path fill="rgba(255,255,255,.4)" d="M6 18l8.5-6L6 6v12zM16 6v12h2V6h-2z"/></svg>
<svg class="ic" style="left:616.00px;top:768.00px;" width="24.0" height="24.0" viewBox="0 0 24 24"><path fill="rgba(255,255,255,.4)" d="M4 18l8.5-6L4 6v12zm9-12v12l8.5-6L13 6z"/></svg>
<svg class="ic" style="left:660.00px;top:768.00px;" width="24.0" height="24.0" viewBox="0 0 24 24"><path fill="rgba(255,255,255,.4)" d="M10 16.5l6-4.5-6-4.5v9zM12 2C6.48 2 2 6.48 2 12s4.48 10 10 10 10-4.48 10-10S17.52 2 12 2zm0 18c-4.41 0-8-3.590-8-8s3.590-8 8-8 8 3.590 8 8-3.590 8-8 8z"/></svg>
<div class="abs" style="left:133px;top:778px;width:421px;height:2px;background:#0052bd;z-index:4"></div>
<div class="abs" style="left:121px;top:772.5px;width:13px;height:13px;border-radius:50%;border:2px solid #0052bd;z-index:4"></div>
<svg class="ic" style="left:733px;top:774.5px" width="10" height="5" viewBox="0 0 10 5"><path d="M0 0h10L5 5z" fill="#003475"/></svg>

<div class="abs" id="panel"></div>
<div class="abs" id="phead"></div>
<svg class="ic" style="left:1832.00px;top:88.75px;" width="24" height="24" viewBox="0 0 24 24"><path fill="#fff" d="M12 2C6.48 2 2 6.48 2 12s4.48 10 10 10 10-4.48 10-10S17.52 2 12 2zm1 17h-2v-2h2v2zm2.070-7.750l-.9.920C13.450 12.900 13 13.500 13 15h-2v-.5c0-1.100.450-2.100 1.170-2.830l1.240-1.260c.370-.360.590-.860.590-1.410 0-1.100-.9-2-2-2s-2 .9-2 2H8c0-2.210 1.790-4 4-4s4 1.790 4 4c0 .880-.360 1.680-.930 2.250z"/></svg>
<svg class="ic" style="left:1872.00px;top:89.00px;" width="24" height="24" viewBox="0 0 24 24"><path fill="#fff" d="M19 6.41L17.59 5 12 10.59 6.41 5 5 6.41 10.59 12 5 17.59 6.41 19 12 13.41 17.59 19 19 17.59 13.41 12z"/></svg>
<div class="abs fab" style="left:1764px;top:122px"></div>
<div class="abs fab" style="left:1836px;top:122px"></div>
<svg class="ic" style="left:1780.00px;top:138.00px;" width="24.0" height="24.0" viewBox="0 0 24 24"><path fill="rgba(0,0,0,.26)" d="M9 16.2L4.8 12l-1.4 1.4L9 19 21 7l-1.4-1.4L9 16.2z"/></svg>
<svg class="ic" style="left:1852.00px;top:138.00px;" width="24.0" height="24.0" viewBox="0 0 24 24"><path fill="rgba(0,0,0,.26)" d="M19 6.41L17.59 5 12 10.59 6.41 5 5 6.41 10.59 12 5 17.59 6.41 19 12 13.41 17.59 19 19 17.59 13.41 12z"/></svg>
<div class="abs" id="tabline"></div>
<div class="abs" id="ink"></div>

<!-- scrollbar -->
<div class="abs" style="left:1905px;top:199px;width:15px;height:881px;background:#f1f1f1;z-index:30"></div>
<div class="abs" style="left:1907px;top:214px;width:11px;height:278px;background:#c1c1c1;z-index:31"></div>
<svg class="ic" style="left:1908px;top:203px;z-index:31" width="9" height="5" viewBox="0 0 9 5"><path d="M4.5 0L9 5H0z" fill="#a3a3a3"/></svg>
<svg class="ic" style="left:1908px;top:1071px;z-index:31" width="9" height="5" viewBox="0 0 9 5"><path d="M0 0h9L4.500 5z" fill="#505050"/></svg>

<!-- highlight -->
<div class="abs" style="left:790px;top:232px;width:1093px;height:292px;border:3.500px solid #ffc53d;border-radius:10px;z-index:25;box-shadow:0 0 6px 1px rgba(255,197,61,.55),inset 0 0 4px rgba(255,190,80,.5)"></div>
<!-- panel 1 -->
<div class="abs exp" style="left:796px;top:236px;width:1081px;height:282px"></div>
<div class="abs exph" style="left:796px;top:236px;width:1081px;height:40px"></div>
<svg class="ic" style="left:1842px;top:250px" width="16" height="12" viewBox="0 0 16 12"><path d="M2 2.500l6 6 6-6" fill="none" stroke="#111" stroke-width="2.800"/></svg>
<div class="abs sel" style="left:816px;top:338px;width:1041px;height:28px"></div>
<svg class="ic" style="left:1842px;top:352px" width="10" height="5" viewBox="0 0 10 5"><path d="M0 0h10L5 5z" fill="#999"/></svg>
<div class="abs sel" style="left:816px;top:418px;width:1041px;height:28px"></div>
<svg class="ic" style="left:1842px;top:432px" width="10" height="5" viewBox="0 0 10 5"><path d="M0 0h10L5 5z" fill="#999"/></svg>
<div class="abs cb off" style="left:817px;top:468px"></div>
<!-- arrow -->
<svg class="ic" style="left:980px;top:305px;z-index:60" width="120" height="55" viewBox="980 305 120 55"><path d="M986.700 347L1010.800 328 1013.200 333.500 1087.500 312.500 1090.300 323.700 1016 344.700 1017.500 351z" fill="#ffc53d"/></svg>

<!-- panel 2 -->
<div class="abs exp" style="left:796px;top:528px;width:1081px;height:600px"></div>
<div class="abs exph" style="left:796px;top:528px;width:1081px;height:39px"></div>
<svg class="ic" style="left:1842px;top:541px" width="16" height="12" viewBox="0 0 16 12"><path d="M2 2.500l6 6 6-6" fill="none" stroke="#111" stroke-width="2.800"/></svg>
<div class="abs ul" style="left:816px;top:634px;width:1041px"></div>
<div class="abs ul" style="left:816px;top:700px;width:1041px"></div>
<div class="abs ul" style="left:816px;top:766px;width:1041px"></div>
<div class="abs cb on" style="left:817px;top:797px"></div>
<svg class="ic" style="left:817px;top:797px" width="18" height="18" viewBox="0 0 18 18"><path d="M3.200 9.100l4 4.300 8-8.600" fill="none" stroke="#fff" stroke-width="2"/></svg>
<div class="abs cb off" style="left:817px;top:839px"></div>
<div class="abs ul" style="left:816px;top:916px;width:1041px"></div>
<div class="abs cb on" style="left:817px;top:947px"></div>
<svg class="ic" style="left:817px;top:947px" width="18" height="18" viewBox="0 0 18 18"><path d="M3.200 9.100l4 4.300 8-8.600" fill="none" stroke="#fff" stroke-width="2"/></svg>
<div class="abs" style="left:817px;top:999px;width:22px;height:22px;border-radius:50%;background:#fff;z-index:14;box-shadow:0 2px 3px rgba(0,0,0,.22),0 0 2px rgba(0,0,0,.12)"></div>
<div class="abs ul" style="left:850px;top:1024px;width:958px"></div>
<svg class="ic" style="left:1821.00px;top:998.00px;" width="24.0" height="24.0" viewBox="0 0 24 24"><path fill="#505050" d="M19 6.41L17.59 5 12 10.59 6.41 5 5 6.41 10.59 12 5 17.59 6.41 19 12 13.41 17.59 19 19 17.59 13.41 12z"/></svg>
<div class="abs" style="left:817.500px;top:1065.500px;width:21px;height:21px;border-radius:50%;background:#000;z-index:14"></div>
<svg class="ic" style="left:1821.00px;top:1063.50px;" width="24.0" height="24.0" viewBox="0 0 24 24"><path fill="#505050" d="M19 6.41L17.59 5 12 10.59 6.41 5 5 6.41 10.59 12 5 17.59 6.41 19 12 13.41 17.59 19 19 17.59 13.41 12z"/></svg>

<span class="t" id="t0" style="left:20.60px;top:51.09px;font-size:12px;color:#7d7d7d;letter-spacing:0.181px;">Title *</span>
<span class="t" id="t1" style="left:21.35px;top:73.01px;font-size:30px;color:#1f1f1f;font-weight:700;letter-spacing:-0.399px;">Dashboard1</span>
<span class="t" id="t2" style="left:53.38px;top:139.90px;font-size:15px;color:#fff;letter-spacing:0.341px;">My title</span>
<span class="t" id="t3" style="left:63.45px;top:168.90px;font-size:14px;color:rgba(255,255,255,.76);letter-spacing:0.057px;">History - last minute</span>
<span class="t" id="t4" style="left:21.75px;top:196.26px;font-size:16px;color:#fff;letter-spacing:-0.539px;">Tracker1</span>
<span class="t" id="t5" style="left:270.10px;top:788.64px;font-size:12px;color:#fff;letter-spacing:-0.045px;-webkit-text-stroke:.35px #fff;">May 31, 2022, 3:15:47 PM</span>
<span class="t" id="t6" style="left:705.00px;top:768.96px;font-size:16px;color:#001f47;">1</span>
<span class="t" id="t7" style="left:1644.30px;top:18.36px;font-size:16px;color:#fff;letter-spacing:0.179px;">History - last minute</span>
<span class="t" id="t8" style="left:799.45px;top:71.58px;font-size:24px;color:#fff;letter-spacing:0.418px;">My title</span>
<span class="t" id="t9" style="left:800.60px;top:109.86px;font-size:16px;color:rgba(255,255,255,.7);letter-spacing:0.284px;">Trip Animation</span>
<span class="t" id="t10" style="left:832.25px;top:167.45px;font-size:14px;color:#808080;letter-spacing:0.087px;-webkit-text-stroke:.3px #808080;">Data</span>
<span class="t" id="t11" style="left:981.70px;top:167.45px;font-size:14px;color:#808080;letter-spacing:0.364px;-webkit-text-stroke:.3px #808080;">Settings</span>
<span class="t" id="t12" style="left:1136.70px;top:167.45px;font-size:14px;color:#212121;letter-spacing:0.166px;-webkit-text-stroke:.3px #212121;">Advanced</span>
<span class="t" id="t13" style="left:1304.00px;top:167.45px;font-size:14px;color:#808080;letter-spacing:0.486px;-webkit-text-stroke:.3px #808080;">Actions</span>
<span class="t" id="t14" style="left:815.10px;top:249.06px;font-size:16px;color:#212121;letter-spacing:-0.022px;">Map Provider Settings</span>
<span class="t" id="t15" style="left:815.40px;top:315.64px;font-size:12px;color:#787878;letter-spacing:-0.060px;">Map Provider</span>
<span class="t" id="t16" style="left:827.50px;top:344.86px;font-size:16px;color:#666;letter-spacing:-0.055px;">Openstreet maps</span>
<span class="t" id="t17" style="left:815.40px;top:395.64px;font-size:12px;color:#787878;letter-spacing:0.017px;">Map provider</span>
<span class="t" id="t18" style="left:827.50px;top:424.86px;font-size:16px;color:#666;letter-spacing:-0.028px;">OpenStreetMap.Mapnik (Default)</span>
<span class="t" id="t19" style="left:846.00px;top:469.06px;font-size:16px;color:#212121;letter-spacing:0.041px;">Use custom provider</span>
<span class="t" id="t20" style="left:816.30px;top:540.16px;font-size:16px;color:#212121;letter-spacing:0.137px;">Trip Animation Settings</span>
<span class="t" id="t21" style="left:815.40px;top:587.64px;font-size:12px;color:#787878;letter-spacing:0.123px;">Normalization data step (ms)</span>
<span class="t" id="t22" style="left:816.70px;top:611.06px;font-size:16px;color:#212121;letter-spacing:0.122px;">1000</span>
<span class="t" id="t23" style="left:815.40px;top:653.54px;font-size:12px;color:#787878;letter-spacing:-0.021px;">Latitude key name</span>
<span class="t" id="t24" style="left:816.30px;top:677.06px;font-size:16px;color:#212121;letter-spacing:0.267px;">latitude</span>
<span class="t" id="t25" style="left:815.40px;top:719.54px;font-size:12px;color:#787878;letter-spacing:-0.050px;">Longitude key name</span>
<span class="t" id="t26" style="left:816.30px;top:743.06px;font-size:16px;color:#212121;letter-spacing:0.213px;">longitude</span>
<span class="t" id="t27" style="left:847.20px;top:798.16px;font-size:16px;color:#212121;letter-spacing:-0.091px;">Show label</span>
<span class="t" id="t28" style="left:846.00px;top:840.16px;font-size:16px;color:#212121;letter-spacing:0.045px;">Use label function</span>
<span class="t" id="t29" style="left:815.40px;top:869.84px;font-size:12px;color:#787878;letter-spacing:-0.012px;">Label (pattern examples: '${entityName}', '${entityName}: (Text ${keyName} units.)' )</span>
<span class="t" id="t30" style="left:816.30px;top:892.66px;font-size:16px;color:#212121;letter-spacing:0.120px;">${entityName}</span>
<span class="t" id="t31" style="left:847.20px;top:948.16px;font-size:16px;color:#212121;letter-spacing:0.163px;">Show tooltip</span>
<span class="t" id="t32" style="left:850.30px;top:977.84px;font-size:12px;color:#787878;letter-spacing:0.115px;">Tooltip background color</span>
<span class="t" id="t33" style="left:850.30px;top:1001.56px;font-size:16px;color:#212121;letter-spacing:-0.100px;">rgb(255, 255, 255)</span>
<span class="t" id="t34" style="left:850.30px;top:1043.64px;font-size:12px;color:#787878;letter-spacing:0.255px;">Tooltip font color</span>
<span class="t" id="t35" style="left:850.30px;top:1067.56px;font-size:16px;color:#212121;letter-spacing:-0.210px;">rgb(0, 0, 0)</span>
<span class="t" id="t36" style="left:550.57px;top:741.59px;font-size:11px;color:#0078a8;letter-spacing:0.188px;text-decoration:underline;">Leaflet</span>
<span class="t" id="t37" style="left:587.40px;top:741.59px;font-size:11px;color:#333;letter-spacing:0.564px;">| ©</span>
<span class="t" id="t38" style="left:605.30px;top:741.59px;font-size:11px;color:#0078a8;letter-spacing:-0.083px;text-decoration:underline;">OpenStreetMap</span>
<span class="t" id="t39" style="left:684.50px;top:741.59px;font-size:11px;color:#333;letter-spacing:0.061px;">contributors</span>
<span class="t" id="t40" style="left:41.40px;top:233.48px;font-size:24px;color:#000;font-weight:700;font-family:'Liberation Mono',monospace;z-index:8;">+</span>
<span class="t" id="t41" style="left:41.40px;top:263.08px;font-size:24px;color:#000;font-weight:700;font-family:'Liberation Mono',monospace;z-index:8;">−</span>

</body></html>
